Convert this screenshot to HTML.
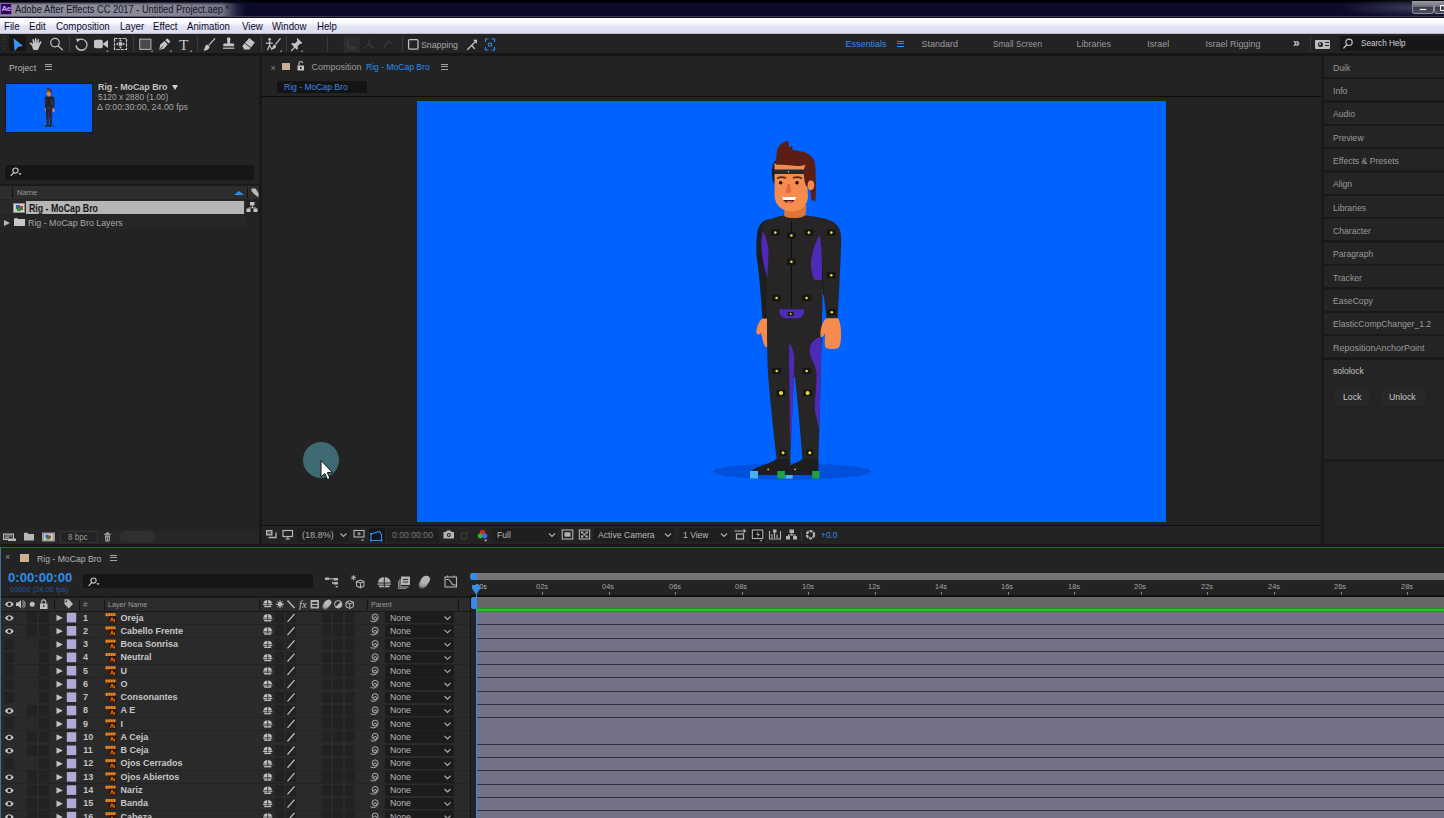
<!DOCTYPE html>
<html>
<head>
<meta charset="utf-8">
<title>Adobe After Effects CC 2017 - Untitled Project.aep *</title>
<style>
*{box-sizing:border-box;margin:0;padding:0}
html,body{width:1444px;height:818px;overflow:hidden;background:#191919}
body{font-family:"Liberation Sans",sans-serif;font-size:9px;color:#a2a2a2;position:relative}
.a{position:absolute}
.t{position:absolute;white-space:nowrap;line-height:1;transform-origin:0 50%}
svg{position:absolute;overflow:visible}
#titlebar{left:0;top:0;width:1444px;height:17.500px;background:#0c0c2a}
#menubar{left:0;top:17.500px;width:1444px;height:16.500px;background:linear-gradient(#ffffff 0%,#f6f6fd 35%,#e3e4f3 50%,#dddeee 92%,#a4a4b2 100%)}
#menubar .t{color:#0c0c2a;font-size:10.5px;top:3px;transform:scaleX(.92)}
#toolbar{left:0;top:34px;width:1444px;height:19px;background:#232323}
.panel{background:#232323}
.ws{top:40.400px;font-size:9px;color:#9b9b9b}
.sep{position:absolute;top:36px;width:1px;height:15px;background:#3a3a3a}
.rp{position:absolute;left:1324px;width:120px;height:21px;background:#242424}
.rp .t{left:9px;top:7.500px;font-size:9px;color:#9a9a9a}
.g{stroke:#c4c4c4;fill:none;stroke-width:1.2;stroke-linecap:round;stroke-linejoin:round}
.f{fill:#c4c4c4;stroke:none}
</style>
</head>
<body>
<div id="titlebar" class="a">
<div class="a" style="left:0;top:0;width:300px;height:17px;background:linear-gradient(90deg,rgba(150,150,162,.95) 0,rgba(146,146,160,.92) 160px,rgba(135,135,150,.85) 222px,rgba(70,70,95,.45) 236px,rgba(10,10,36,0) 246px)"></div>
<div class="a" style="left:0;top:0;width:1444px;height:2.500px;background:linear-gradient(#000 0,#000 50%,rgba(0,0,0,0))"></div><div class="a" style="left:0;top:0;width:250px;height:5px;background:linear-gradient(rgba(5,5,20,.95) 0,rgba(5,5,20,.8) 35%,rgba(5,5,20,0))"></div>
<div class="a" style="left:0;top:15.800px;width:1444px;height:1.700px;background:linear-gradient(rgba(40,40,60,.5),#5a5a68)"></div>
<div class="a" style="left:0;top:3px;width:12px;height:12px;background:#2a0a4a;border:1px solid #8a5cc0"></div>
<div class="t" style="left:1.5px;top:5px;font-size:8px;color:#c9a8ff;font-weight:bold;letter-spacing:-.5px">Ae</div>
<div class="t" style="left:15px;top:3.5px;font-size:10.5px;color:#15152a;transform:scaleX(.885)">Adobe After Effects CC 2017 - Untitled Project.aep *</div>
<div class="a" style="left:1340px;top:0;width:104px;height:17px;background:radial-gradient(ellipse at 70% 45%,rgba(120,120,150,.42),rgba(12,12,42,0) 72%)"></div>
<div class="a" style="left:1412px;top:1px;width:22px;height:13px;border:1px solid #8a8aa0;border-top:none;border-radius:0 0 3px 3px;background:linear-gradient(#9c9ca6,#70707c 45%,#3c3c4a 52%,#4e4e5c)"></div>
<div class="a" style="left:1419px;top:8px;width:8px;height:3px;background:#fff;border:1px solid #555"></div>
<div class="a" style="left:1434px;top:1px;width:12px;height:13px;border:1px solid #8a8aa0;border-top:none;border-radius:0 0 0 3px;background:linear-gradient(#9c9ca6,#70707c 45%,#3c3c4a 52%,#4e4e5c)"></div>
<div class="a" style="left:1440px;top:5px;width:6px;height:6px;border:1.5px solid #fff"></div>
</div>
<div id="menubar" class="a">
<div class="t" style="left:4px">File</div>
<div class="t" style="left:29px">Edit</div>
<div class="t" style="left:56px">Composition</div>
<div class="t" style="left:120px">Layer</div>
<div class="t" style="left:153px">Effect</div>
<div class="t" style="left:187px">Animation</div>
<div class="t" style="left:242px">View</div>
<div class="t" style="left:272px">Window</div>
<div class="t" style="left:317px">Help</div>
</div>
<div id="toolbar" class="a"></div>
<div class="a" style="left:0;top:53px;width:1444px;height:3px;background:#161616"></div>
<div class="a" style="left:3px;top:36px;width:1px;height:15px;background:repeating-linear-gradient(#4a4a4a 0 1px,transparent 1px 3px)"></div>
<div class="a" style="left:9px;top:35px;width:17px;height:16px;background:#161616"></div>
<svg style="left:0;top:34.600px" width="520" height="19" viewBox="0 34 520 19">
<path d="M13.6 37.2 L23 45 L18.2 45.8 L14.6 50.2 Z" fill="#3b95ff"/>
<g transform="translate(37 44.300) scale(1.120) translate(-37 -42.600)"><path class="f" d="M33 43.500 l-2.200-2 c-.8-.6 .2-1.800 1-1.200 l1.700 1.200 -.6-3.600 c-.1-1 1.200-1.200 1.400-.2 l.7 3 .1-3.800 c0-1 1.400-1 1.400 0 l.2 3.800 .8-3.200 c.2-1 1.500-.7 1.300 .2 l-.5 3.600 1.400-2 c.5-.8 1.600-.1 1.200 .7 l-1.600 3.300 c-.5 1.200-.8 2.600-1.600 3.400 l-3.600 0 c-.9-.9-1.300-2.100-1.300-3.200z"/></g>
<circle class="g" cx="55" cy="41.6" r="4.3" stroke-width="1.3"/><path class="g" d="M58.2 45 L62.4 48.8" stroke-width="1.7"/>
<path class="g" d="M78 39.5 A5.5 5.5 0 1 1 76.2 45" stroke-width="1.2"/><path class="g" d="M76.2 45 A5.5 5.5 0 0 0 84 48.600" stroke-dasharray="1 1.3" stroke-width="1"/><path class="f" d="M76 37.5 l4 .6 -2.600 3.200z"/>
<rect class="f" x="94" y="38.8" width="8.8" height="8.4" rx="1.6"/><path class="f" d="M102.500 43 L108 39 L108 47 Z"/><path class="f" d="M106 51 l2.200 0 0-2.200z" opacity=".7"/>
<rect x="114.500" y="37.500" width="12" height="11" class="g" stroke-dasharray="2.500 1.800" stroke-width="1.200"/><rect x="118.700" y="41.200" width="3.600" height="3.600" class="f"/><path class="f" d="M120.500 38.300l1.500 1.900h-3zM120.500 47.700l1.500-1.900h-3zM116 43l1.900-1.500v3zM125 43l-1.900-1.500v3z"/>
<rect x="139.700" y="38.200" width="11.200" height="10.200" fill="#4a4a4a" stroke="#a8a8a8" stroke-width="1.100"/><path class="f" d="M150.500 51 l2.200 0 0-2.200z" opacity=".7"/>
<path class="f" d="M159 49.200 l1.300-5.800 4.200-3.400 3.200 3.200 -3.400 4.200z"/><path class="f" d="M165.300 39.200 l1.900-1.900 3.300 3.300 -1.900 1.900z"/><path d="M159.300 48.900 l3.600-3.600" stroke="#232323" stroke-width=".8"/><path class="f" d="M169.500 51 l2.200 0 0-2.200z" opacity=".7"/>
<text x="179" y="48.600" font-family="Liberation Serif,serif" font-size="15.500" fill="#c4c4c4">T</text><path class="f" d="M189.500 51 l2.200 0 0-2.200z" opacity=".7"/>
<path class="g" d="M214.800 37.600 L209 44.200" stroke-width="2.400"/><path class="f" d="M203.400 49.600 c2.800 .3 5.600-.8 6.300-3.800 l-2.600-2.200 c-2.400 .7-1.800 4.200-3.700 6z"/>
<path class="f" d="M227.100 37.200 a1.900 1.900 0 0 1 3.200 0 c.6 1.400-.6 3.200-.4 5 l4.200 .6 0 2.400 -10.800 0 0-2.400 4.200-.6 c.2-1.800-1-3.600-.4-5z"/><rect class="f" x="223" y="46.600" width="11.400" height="1.200"/>
<path class="f" d="M249.200 37 l5.600 4.400 -5.400 7.200 -5.200-.2 -1.900-3.400z"/><path d="M245.200 42.300 l5.400 4.300" stroke="#232323" stroke-width=".9"/>
<circle class="f" cx="269.600" cy="38.400" r="1.400"/><path class="g" d="M269.600 40.300 v4 l-2 4.500 M269.600 44.300 l2.200 4.200 M266.300 42.200 h6" stroke-width="1.100"/><path class="g" d="M280.300 37.700 L275.800 43" stroke-width="1.700"/><path class="f" d="M271.500 48 c2 .2 4.200-.6 4.800-2.800 l-1.900-1.600 c-1.700 .5-1.400 3-2.900 4.400z"/><path class="f" d="M279.500 51 l2.200 0 0-2.200z" opacity=".7"/>
<path class="f" d="M297 36.800 l5.300 5.300 -1.200 .9 -1-.3 -2.500 2.500 .3 2.600 -1 1 -5.700-5.700 1-1 2.600 .3 2.500-2.500 -.3-1z"/><path class="g" d="M295 46 L291.500 49.500" stroke-width="1.200"/><path class="f" d="M300.500 51 l2.200 0 0-2.200z" opacity=".7"/>
<rect x="343.600" y="35.500" width="16.400" height="15.500" fill="#2c2c2c"/><path d="M348 38v9h8" stroke="#3c3c3c" stroke-width="1.300" fill="none"/><path d="M369 38v5l-4.500 4M369 43l4.500 4" stroke="#3a3a3a" stroke-width="1.200" fill="none"/><path d="M384 47l4-7 4 3" stroke="#393939" stroke-width="1.200" fill="none"/>
<rect x="408.600" y="38.700" width="9.400" height="9.400" rx="1" fill="none" stroke="#bdbdbd" stroke-width="1.300"/>
<path class="g" d="M467.500 48.500 l4-4 3 3 M471.500 44.500 L476.500 39.500" stroke-width="1.200"/><path class="f" d="M473 38.800 h4 v4z"/>
<g stroke="#2d8ceb" fill="none" stroke-width="1.200"><path d="M485.500 41v-3h3M491.500 38h3v3M494.500 46v3h-3M488.500 49h-3v-3"/><path d="M488.300 42.200h3.400v2.800h-3.400z" stroke-width="1"/></g>
</svg>
<div class="sep" style="left:69px"></div>
<div class="sep" style="left:133px"></div>
<div class="sep" style="left:196.5px"></div>
<div class="sep" style="left:260.5px"></div>
<div class="sep" style="left:286px"></div>
<div class="sep" style="left:326.5px"></div>
<div class="sep" style="left:402px"></div>
<div class="t" style="left:421px;top:40.700px;font-size:9px;color:#a8a8a8;transform:scaleX(.97)">Snapping</div>
<div class="t ws" style="left:845.5px;color:#2d8ceb">Essentials</div>
<div class="t ws" style="left:921.5px">Standard</div>
<div class="t ws" style="left:992.5px;transform:scaleX(.916)">Small Screen</div>
<div class="t ws" style="left:1076.5px">Libraries</div>
<div class="t ws" style="left:1147.3px">Israel</div>
<div class="t ws" style="left:1205.6px">Israel Rigging</div>
<div class="a" style="left:897px;top:41px;width:7px;height:6px;background:linear-gradient(#2d8ceb 0 1px,transparent 1px 2.500px,#2d8ceb 2.500px 3.500px,transparent 3.500px 5px,#2d8ceb 5px 6px)"></div>
<div class="t" style="left:1293px;top:37px;font-size:12px;color:#c8c8c8;font-weight:bold">»</div>
<div class="a" style="left:1309.500px;top:36px;width:1px;height:15px;background:#3a3a3a"></div>
<div class="a" style="left:1315px;top:39.500px;width:15px;height:9px;background:#bdbdbd;border-radius:1px"></div>
<div class="a" style="left:1317.500px;top:41.500px;width:5px;height:5px;background:#232323;border-radius:50%"></div><div class="a" style="left:1319px;top:43px;width:2px;height:2px;background:#bdbdbd;border-radius:50%"></div>
<div class="a" style="left:1324.500px;top:42px;width:4px;height:1.200px;background:#232323"></div><div class="a" style="left:1324.500px;top:45px;width:4px;height:1.200px;background:#232323"></div>
<div class="a" style="left:1340px;top:36px;width:104px;height:15px;background:#171717"></div>
<svg style="left:1340px;top:36px" width="20" height="15"><circle cx="9" cy="6.300" r="3.200" class="g" stroke-width="1.200"/><path class="g" d="M6.700 8.800 L3.800 12" stroke-width="1.400"/></svg>
<div class="t" style="left:1361px;top:39px;font-size:9px;color:#d2d2d2;transform:scaleX(.90)">Search Help</div>
<div id="project" class="a panel" style="left:0;top:56px;width:259px;height:488px"></div>
<div class="t" style="left:9.200px;top:62.500px;font-size:9.500px;color:#b4b4b4;transform:scaleX(.915)">Project</div>
<div class="a" style="left:45px;top:64px;width:7px;height:6px;background:linear-gradient(#a4a4a4 0 1px,transparent 1px 2.500px,#a4a4a4 2.500px 3.500px,transparent 3.500px 5px,#a4a4a4 5px 6px)"></div>
<div class="a" style="left:5px;top:83px;width:88px;height:50px;background:#0062ff;border:1px solid #10182c"></div>
<div class="t" style="left:97.500px;top:82.500px;font-size:9px;font-weight:bold;color:#c2c2c2;transform:scaleX(.985)">Rig - MoCap Bro</div>
<div class="a" style="left:172px;top:85px;width:0;height:0;border-left:3px solid transparent;border-right:3px solid transparent;border-top:5px solid #d0d0d0"></div>
<div class="t" style="left:97.500px;top:92.500px;font-size:9px;color:#a6a6a6;transform:scaleX(.93)">5120 x 2880 (1.00)</div>
<div class="t" style="left:97px;top:102.500px;font-size:9px;color:#a6a6a6;transform:scaleX(.983)">Δ 0:00:30:00, 24.00 fps</div>
<div class="a" style="left:5px;top:165px;width:248.500px;height:14.500px;background:#161616;border-radius:2px"></div>
<svg style="left:9px;top:166px" width="16" height="12"><circle cx="6.500" cy="4.600" r="2.600" class="g" stroke-width="1"/><path class="g" d="M4.600 6.600 L2 9.600" stroke-width="1.100"/><path class="f" d="M9.300 7.300 h3.400 l-1.700 2z"/></svg>
<div class="a" style="left:0;top:183.500px;width:259px;height:2.500px;background:#1a1a1a"></div>
<div class="a" style="left:0;top:186px;width:259px;height:13px;background:#2d2d2d"></div>
<div class="a" style="left:12px;top:187px;width:1px;height:11px;background:#121212"></div>
<div class="a" style="left:247px;top:187px;width:1px;height:11px;background:#121212"></div>
<div class="t" style="left:17px;top:189px;font-size:8px;color:#989898;transform:scaleX(.95)">Name</div>
<div class="a" style="left:234px;top:190.500px;width:0;height:0;border-left:5px solid transparent;border-right:5px solid transparent;border-bottom:4px solid #2d8ceb"></div>
<svg style="left:250px;top:187px" width="9" height="12"><path d="M1.500 1.500 h4 l3 4.500 v4.500 l-4.500-3.500 -2.500-3z" fill="#b8b8b8"/></svg>
<div class="a" style="left:0;top:200px;width:246px;height:14px;background:#292929"></div>
<div class="a" style="left:26px;top:200.500px;width:218px;height:13.500px;background:#b6b6b6"></div>
<div class="a" style="left:13px;top:203px;width:12px;height:10px;background:#cfcfcf;border:1px solid #8c8c8c"></div>
<div class="a" style="left:15.500px;top:205px;width:4px;height:4px;background:#2c5fb0"></div><div class="a" style="left:18.500px;top:206px;width:4px;height:4px;background:#c03a28"></div><div class="a" style="left:16.500px;top:208px;width:4px;height:3px;background:#2e8b3c"></div>
<div class="t" style="left:28.500px;top:203.500px;font-size:10px;font-weight:bold;color:#151515;transform:scaleX(.88)">Rig - MoCap Bro</div>
<svg style="left:246px;top:201px" width="12" height="12"><g fill="#c4c4c4"><rect x="4" y="1" width="4.500" height="3.500"/><rect x="0.500" y="7.500" width="4" height="3.500"/><rect x="7.500" y="7.500" width="4" height="3.500"/><path d="M5.800 4.500h1v2h3.200v1h-1v-.2h-5.500v.2h-1v-1h3.300z"/></g></svg>
<div class="a" style="left:0;top:215px;width:246px;height:14px;background:#262626"></div>
<div class="a" style="left:4px;top:219.500px;width:0;height:0;border-top:3px solid transparent;border-bottom:3px solid transparent;border-left:6px solid #b8b8b8"></div>
<div class="a" style="left:14px;top:219px;width:11px;height:7px;background:#c8c8c8"></div><div class="a" style="left:14px;top:217.500px;width:4px;height:1px;background:#a0a0a0"></div>
<div class="t" style="left:28px;top:218px;font-size:9.500px;color:#a8a8a8;transform:scaleX(.93)">Rig - MoCap Bro Layers</div>
<div class="a" style="left:0;top:529.500px;width:259px;height:14.500px;background:#262626"></div>
<svg style="left:0;top:529px" width="160" height="15"><g fill="#b8b8b8"><path d="M3 4.500h11v6.500h-11z M4.200 5.700v4.100h8.600v-4.100z" fill-rule="evenodd"/><rect x="5" y="6.500" width="7" height="1"/><rect x="5" y="8.300" width="4" height="1"/><rect x="8" y="9.500" width="8" height="2.500"/><path d="M24 3.800h3.500l1 1.200h5.500v6.500h-10z"/><rect x="42" y="3.500" width="13" height="9" fill="#9a9a9a"/><rect x="44" y="4.800" width="9" height="6.400" fill="#c8c8c8"/><rect x="45.500" y="5.800" width="3" height="3" fill="#2c5fb0"/><rect x="48" y="6.500" width="3" height="3" fill="#c03a28"/><rect x="46.500" y="8" width="3" height="2.500" fill="#2e8b3c"/><path d="M104 4.800h7v1h-7z M105 6.500h5l-.4 6h-4.200z M106.200 3.600h2.600v1.200h-2.600z"/></g><g stroke="#262626" stroke-width=".8"><path d="M106.600 7.500v4M108.400 7.500v4"/></g></svg>
<div class="a" style="left:60px;top:531px;width:38px;height:12px;border:1px solid #343434;background:#232323"></div>
<div class="t" style="left:68px;top:532.500px;font-size:8.500px;color:#9a9a9a;transform:scaleX(.95)">8 bpc</div>
<div class="a" style="left:119px;top:531px;width:36px;height:11px;background:#303030;border-radius:5.500px"></div>
<div id="comp" class="a panel" style="left:262px;top:56px;width:1058.500px;height:488px"></div>
<div class="t" style="left:270.500px;top:63.500px;font-size:9px;color:#858585">×</div>
<div class="a" style="left:281.500px;top:62.800px;width:8px;height:7.600px;background:#c4b094"></div>
<svg style="left:296px;top:60px" width="10" height="12"><rect x="1.500" y="5.500" width="6.500" height="5" fill="#c4c4c4"/><path d="M3 5.500v-2.200a1.800 1.800 0 0 1 3.600 0" stroke="#c4c4c4" stroke-width="1.100" fill="none"/><rect x="4" y="7" width="1.500" height="2" fill="#232323"/></svg>
<div class="t" style="left:311.500px;top:62.500px;font-size:9px;color:#9c9c9c;transform:scaleX(1.0)">Composition</div>
<div class="t" style="left:366px;top:62.500px;font-size:9px;color:#2d8ceb;transform:scaleX(.95)">Rig - MoCap Bro</div>
<div class="a" style="left:441px;top:64px;width:7px;height:6px;background:linear-gradient(#a4a4a4 0 1px,transparent 1px 2.500px,#a4a4a4 2.500px 3.500px,transparent 3.500px 5px,#a4a4a4 5px 6px)"></div>
<div class="a" style="left:277px;top:81px;width:90px;height:12px;background:#141414;border-radius:1px"></div>
<div class="t" style="left:284px;top:82.500px;font-size:9px;color:#3b86e0;transform:scaleX(.95)">Rig - MoCap Bro</div>
<div class="a" style="left:262px;top:96px;width:1058.500px;height:1.200px;background:#0c0c0c"></div>
<div class="a" style="left:417px;top:101px;width:749px;height:421px;background:#0062ff"></div>
<div class="a" style="left:262px;top:524.500px;width:1058.500px;height:1.500px;background:#0e0e0e"></div>
<svg style="left:700px;top:130px" width="200" height="360" viewBox="700 130 200 360"><g id="bro"><ellipse cx="792" cy="471.5" rx="79" ry="8.2" fill="#0050dc"/><path d="M770 219 C762 220 757.5 226 757 235 C756 245 756 255 757.5 262 C759 275 761 295 762.5 319 L768.5 319 L770 240Z" fill="#1f1e1e"/><path d="M762.5 318.5 L768 318.5 L768 347 C766 348 764.5 346 763.5 343 C762.5 340 762 336 761 333 C759.5 334.5 757.500 335 756.500 333.500 C756 329 758 322 762.500 318.500Z" fill="#f58c4e"/><path d="M767 318 L822 318 C822 335 821 360 820.5 380 C820 410 819 440 818.400 460 L802.500 460 C801 440 798.500 410 795 377 L793.500 377 C792.500 410 791 440 790.200 460 L776.800 460 C774.500 440 770 400 768 373 C767 350 767 335 767 318Z" fill="#272525"/><path d="M789.500 342 C791 345 793.500 350 794 356 C794.500 364 794 370 793.600 377 C793 400 792 420 791 446 C789.500 430 789.800 410 789.600 395 C789.300 375 788.800 355 789.500 342Z" fill="#4f2ab8"/><path d="M820.800 337 C815 338 809.500 343 809.700 350.500 C810 358 815 364 816.300 371 C817.500 380 815 395 814.800 407 C814.800 415 818 422 819.300 430 L820.300 390 C820.800 370 821.500 350 820.800 337Z" fill="#4f2ab8"/><path d="M752.300 475 L752.300 470.500 C756 466.500 770 464 776.500 459 L790.200 459 L790.200 475Z" fill="#1f1e1e"/><path d="M779.200 475 L779.200 470.500 C783 466.500 797 464 802.500 459 L818.400 459 L818.400 475Z" fill="#1f1e1e"/><circle cx="768.200" cy="469.300" r=".9" fill="#e9dc3c"/><circle cx="795.100" cy="469.300" r=".9" fill="#e9dc3c"/><rect x="750" y="471" width="8" height="7.500" fill="#4ab2ee"/><rect x="777.300" y="471" width="7.600" height="7.500" fill="#1fa243"/><rect x="785.400" y="475" width="7.300" height="3.700" fill="#4ab2ee"/><rect x="812.200" y="471" width="7.400" height="7.500" fill="#1fa243"/><path d="M784.500 205 L806.500 205 L805 221 C798 223.500 790 223.500 784 221Z" fill="#dd7439"/><path d="M784 215.400 C786 219 802 219 804.200 215.400 C812 216 820 217 826 219.500 L823 262 C822.500 280 822.500 300 822 320 L767 320 C766.500 300 766.500 280 766.500 262 L762 225 C768 219 776 216.500 784 215.400Z" fill="#272525"/><path d="M818 218 C828 218 836.500 222 839.500 229 C841.500 234 841.300 240 841 246 C840.800 258 840 270 839.600 280 C839 295 838.300 305 837.800 318.500 L826.300 318.500 C825.500 308 823.800 298 823 290 C822 280 822.300 272 822.300 266 L819 240Z" fill="#272525"/><path d="M822.300 266 C822 275 822.500 285 823.600 295" stroke="#1a1919" stroke-width="1" fill="none"/><path d="M826.500 318.300 L838 318.300 C840.500 322 841.500 330 841 338 C840.700 343 840 347 838 348.300 C835 349.500 829 349.500 825.500 347.500 C824 343 825.200 337 825 333 C823.800 336.500 821.500 338 820.600 336.500 C820 331 821.500 322 826.500 318.300Z" fill="#f58c4e"/><path d="M762.500 231.500 C766 236 768.800 246 768.500 254.500 C768.300 262 767.800 270 767.200 277.500 C765.500 272 763 262 762 254 C761 246 761.300 237 762.500 231.500Z" fill="#4f2ab8"/><path d="M819.600 234.800 C816 242 811 252 811 263.800 C811 271 812.500 277 815 280 L821.800 280 C822 270 822 262 821.700 256 C821.500 248 820.500 240 819.600 234.800Z" fill="#4f2ab8"/><path d="M791.400 221.500 V307" stroke="#0e0e0e" stroke-width="1.100"/><path d="M779.300 309.300 L804.200 309.300 C804.500 314 802 318.200 797 318.200 L786 318.200 C781 318.200 779 314 779.300 309.300Z" fill="#4f2ab8"/><rect x="770.8" y="229.3" width="9" height="6.5" rx="1" fill="#161616"/><circle cx="775.3" cy="232.6" r="1.3" fill="#e9dc3c"/><rect x="786.9" y="232.2" width="9" height="6.5" rx="1" fill="#161616"/><circle cx="791.4" cy="235.5" r="1.3" fill="#e9dc3c"/><rect x="804.4" y="229.3" width="9" height="6.5" rx="1" fill="#161616"/><circle cx="808.9" cy="232.6" r="1.3" fill="#e9dc3c"/><rect x="826.8" y="229.3" width="9" height="6.5" rx="1" fill="#161616"/><circle cx="831.3" cy="232.6" r="1.3" fill="#e9dc3c"/><rect x="786.9" y="258.6" width="9" height="6.5" rx="1" fill="#161616"/><circle cx="791.4" cy="261.8" r="1.3" fill="#e9dc3c"/><rect x="826.8" y="271.9" width="9" height="6.5" rx="1" fill="#161616"/><circle cx="831.3" cy="275.2" r="1.3" fill="#e9dc3c"/><rect x="772.1" y="294.8" width="9" height="6.5" rx="1" fill="#161616"/><circle cx="776.6" cy="298" r="1.3" fill="#e9dc3c"/><rect x="802.1" y="294.8" width="9" height="6.5" rx="1" fill="#161616"/><circle cx="806.6" cy="298" r="1.3" fill="#e9dc3c"/><rect x="827.3" y="308.9" width="9" height="6.5" rx="1" fill="#161616"/><circle cx="831.8" cy="312.2" r="1.3" fill="#e9dc3c"/><rect x="772.2" y="367.8" width="9" height="6.5" rx="1" fill="#161616"/><circle cx="776.7" cy="371" r="1.3" fill="#e9dc3c"/><rect x="802.2" y="367.8" width="9" height="6.5" rx="1" fill="#161616"/><circle cx="806.7" cy="371" r="1.3" fill="#e9dc3c"/><rect x="787.7" y="312.0" width="6" height="4" rx="1" fill="#161616"/><circle cx="790.7" cy="314" r="0.9" fill="#e9dc3c"/><rect x="776.5" y="389.8" width="9" height="6.5" rx="1" fill="#161616"/><circle cx="781" cy="393" r="2" fill="#e9dc3c"/><rect x="803.1" y="389.8" width="9" height="6.5" rx="1" fill="#161616"/><circle cx="807.6" cy="393" r="2" fill="#e9dc3c"/><rect x="779.5" y="449.8" width="7" height="6" rx="1" fill="#161616"/><circle cx="783" cy="452.8" r="1.5" fill="#e9dc3c"/><rect x="806.3" y="449.8" width="7" height="6" rx="1" fill="#161616"/><circle cx="809.8" cy="452.8" r="1.5" fill="#e9dc3c"/><path d="M776.500 160 C773 162 771.800 168 772 174 C772 179 773 183 775 184.500 L777.500 184 Z" fill="#1c1a1a"/><path d="M774.400 163.500 L806 163.500 L808 196 C808 205 801 211.500 792 211.500 C783 211.500 775 206 774.600 196Z" fill="#f58c4e"/><path d="M776.300 164.800 C776 160 776.200 154 777.500 148.400 C779.500 144.500 783 142 787.500 141 L788.800 141.600 C788.600 143.500 788.700 145.500 789.200 147.200 L792.200 146.200 L792.800 150.200 C797 150.500 801 151 803.800 152 C808 153.500 812 156 814 160 C815.500 163 815.700 170 815.900 184 C816 190 815.800 196 815.400 201.500 C813.500 201.300 812.200 200.300 811.200 198.600 C811.200 195 811 192 810.500 189 L806 186 C804.500 182 803.500 176 803.700 170 L805.500 164.600 C803 165.800 800 166.300 797 166 C790 165.300 783 164.800 776.300 164.800Z" fill="#5a1e14"/><ellipse cx="810.900" cy="185.300" rx="3.300" ry="4.800" fill="#f58c4e"/><rect x="773.800" y="169.500" width="30.400" height="4.500" rx="1" fill="#25282c"/><circle cx="788.500" cy="171.700" r=".8" fill="#cfe060"/><path d="M777.500 178.200 C780 176.800 783 176.800 785.500 177.800 M793.500 177.800 C796 176.800 799 176.800 801.300 178.200" stroke="#5a2416" stroke-width="1.700" fill="none" stroke-linecap="round"/><circle cx="780.700" cy="182.700" r="1.800" fill="#140c0c"/><circle cx="797" cy="182.700" r="1.800" fill="#140c0c"/><path d="M787.500 184 L790 184 L791 192 C790 193.300 787 193.300 786 192Z" fill="#ea6349"/><path d="M782 197 L796.200 197 C795 201 792 203 789 203 C786 203 783 201 782 197Z" fill="#5a1a14"/><path d="M782 197 L796.200 197 C796 198.500 795.500 199.300 795 199.900 L783.200 199.900 C782.600 199.300 782.200 198.300 782 197Z" fill="#ffffff"/><ellipse cx="789.200" cy="202" rx="2.800" ry="1" fill="#e56a5a"/></g></svg>
<svg style="left:5px;top:83.400px" width="87.500" height="49.200" viewBox="417 101 749 421"><use href="#bro"/></svg>
<div class="a" style="left:297px;top:528px;width:52px;height:14px;background:#1e1e1e"></div>
<div class="a" style="left:369px;top:528px;width:15.500px;height:14px;background:#161616"></div>
<div class="a" style="left:386.500px;top:528px;width:52px;height:14px;background:#1e1e1e"></div>
<div class="a" style="left:492px;top:528px;width:65px;height:14px;background:#1e1e1e"></div>
<div class="a" style="left:594px;top:528px;width:80px;height:14px;background:#1e1e1e"></div>
<div class="a" style="left:678.500px;top:528px;width:51px;height:14px;background:#1e1e1e"></div>
<div class="a" style="left:750px;top:528px;width:15px;height:14px;background:#181818"></div>
<div class="a" style="left:801px;top:529px;width:1px;height:12px;background:#383838"></div>
<svg style="left:262px;top:526px" width="600" height="18" viewBox="262 526 600 18">
<rect x="266" y="530" width="6.500" height="5.500" fill="#b4b4b4"/><path d="M268.500 537.500h7.500v-5" stroke="#b4b4b4" stroke-width="1.300" fill="none"/><rect x="267.200" y="531.200" width="4" height="3" fill="#5a5a5a"/>
<rect x="283" y="530.500" width="9.500" height="6" fill="none" stroke="#b4b4b4" stroke-width="1.200"/><path d="M285.500 539h4.500M287.800 536.500v2.500" stroke="#b4b4b4" stroke-width="1.200"/>
<path d="M340.5 533.5 l3 3 3-3" stroke="#b0b0b0" stroke-width="1.100" fill="none"/>
<rect x="354" y="530.500" width="10" height="6.500" fill="none" stroke="#b4b4b4" stroke-width="1.100"/><path d="M359 532v3.500M357.300 533.800h3.400" stroke="#b4b4b4" stroke-width=".9"/><path d="M361 539.500h3l-1.500 1.800z" fill="#b4b4b4"/>
<path d="M371 540.500v-6.500l8.500-2.500 2 3v6z" stroke="#2d8ceb" stroke-width="1.100" fill="none"/><rect x="370" y="539.500" width="2" height="2" fill="#2d8ceb"/><rect x="380.500" y="539.500" width="2" height="2" fill="#2d8ceb"/><rect x="370" y="533" width="2" height="2" fill="#2d8ceb"/>
<path d="M443.500 532h2.500l1-1.500h3.500l1 1.500h2.500v6.500h-10.500z" fill="#b4b4b4"/><circle cx="448.800" cy="535" r="2" fill="#232323"/><circle cx="448.800" cy="535" r="1" fill="#b4b4b4"/>
<circle cx="464" cy="536" r="2.800" stroke="#3c3c3c" stroke-width="1.200" fill="none"/><path d="M466 533.500l3-2.500" stroke="#3c3c3c" stroke-width="1.200"/>
<circle cx="482.500" cy="532.300" r="2.600" fill="#e02020"/><circle cx="480.300" cy="535.800" r="2.600" fill="#28b428"/><circle cx="484.700" cy="535.800" r="2.600" fill="#3a6cf0"/><path d="M484 539.800h3.400l-1.700 1.800z" fill="#d0d0d0"/>
<path d="M549 533.5 l3 3 3-3" stroke="#b0b0b0" stroke-width="1.100" fill="none"/>
<rect x="562.200" y="530" width="10.600" height="9" fill="none" stroke="#b4b4b4" stroke-width="1.100"/><rect x="564.500" y="532.300" width="6" height="4.400" fill="#b4b4b4"/>
<rect x="579.300" y="530" width="10.400" height="9" fill="none" stroke="#b4b4b4" stroke-width="1.100"/><path d="M581 531.500h2.300v2h-2.300zM585.500 531.500h2.300v2h-2.300zM583.300 533.500h2.200v2h-2.200zM581 535.500h2.300v2h-2.300zM585.500 535.500h2.300v2h-2.300z" fill="#b4b4b4"/>
<path d="M665 533.5 l3 3 3-3" stroke="#b0b0b0" stroke-width="1.100" fill="none"/>
<path d="M721 533.5 l3 3 3-3" stroke="#b0b0b0" stroke-width="1.100" fill="none"/>
<path d="M734.500 531h11M743.500 529.300l2 1.700-2 1.700" stroke="#b4b4b4" stroke-width="1.100" fill="none"/><rect x="736.500" y="534" width="7" height="5" fill="none" stroke="#b4b4b4" stroke-width="1.200"/>
<rect x="752.300" y="530" width="10.500" height="8.500" fill="none" stroke="#b4b4b4" stroke-width="1.100"/><path d="M758.500 531.500l-2.500 3h2l-1 3 3-3.500h-2z" fill="#b4b4b4"/><path d="M759.500 540h3l-1.500 1.500z" fill="#b4b4b4"/>
<path d="M769.500 531v8h11v-8M772 538v-4M774.500 538v-6.500M777 538v-3.500" stroke="#b4b4b4" stroke-width="1.100" fill="none"/><rect x="773" y="529.500" width="3.500" height="3" fill="#b4b4b4"/>
<g fill="#b4b4b4"><rect x="789.500" y="529.500" width="4.500" height="3.500"/><rect x="786" y="536" width="4" height="3.500"/><rect x="793" y="536" width="4" height="3.500"/><path d="M791.300 533h1v1.500h3.200v1.500h-1v-.5h-5.500v.5h-1v-1.500h3.300z"/></g>
<circle cx="810.500" cy="534.700" r="3.600" fill="none" stroke="#b4b4b4" stroke-width="2.200" stroke-dasharray="3 .9"/>
</svg>
<div class="t" style="left:301.5px;top:530.500px;font-size:9px;color:#ababab;transform:scaleX(1.01)">(18.8%)</div>
<div class="t" style="left:392px;top:530.500px;font-size:9px;color:#7a7a7a;transform:scaleX(0.963)">0:00:00:00</div>
<div class="t" style="left:497px;top:530.500px;font-size:9px;color:#b8b8b8;transform:scaleX(0.95)">Full</div>
<div class="t" style="left:598px;top:530.500px;font-size:9px;color:#b8b8b8;transform:scaleX(0.96)">Active Camera</div>
<div class="t" style="left:683px;top:530.500px;font-size:9px;color:#b8b8b8;transform:scaleX(0.95)">1 View</div>
<div class="t" style="left:821px;top:530.500px;font-size:9px;color:#2d8ceb;transform:scaleX(0.93)">+0.0</div>
<div class="rp" style="top:56.00px"><div class="t" style="transform:scaleX(0.957)">Duik</div></div>
<div class="rp" style="top:79.35px"><div class="t" style="transform:scaleX(0.957)">Info</div></div>
<div class="rp" style="top:102.70px"><div class="t" style="transform:scaleX(0.957)">Audio</div></div>
<div class="rp" style="top:126.05px"><div class="t" style="transform:scaleX(0.957)">Preview</div></div>
<div class="rp" style="top:149.40px"><div class="t" style="transform:scaleX(0.957)">Effects &amp; Presets</div></div>
<div class="rp" style="top:172.75px"><div class="t" style="transform:scaleX(0.957)">Align</div></div>
<div class="rp" style="top:196.10px"><div class="t" style="transform:scaleX(0.957)">Libraries</div></div>
<div class="rp" style="top:219.45px"><div class="t" style="transform:scaleX(0.957)">Character</div></div>
<div class="rp" style="top:242.80px"><div class="t" style="transform:scaleX(0.957)">Paragraph</div></div>
<div class="rp" style="top:266.15px"><div class="t" style="transform:scaleX(0.957)">Tracker</div></div>
<div class="rp" style="top:289.50px"><div class="t" style="transform:scaleX(0.957)">EaseCopy</div></div>
<div class="rp" style="top:312.85px"><div class="t" style="transform:scaleX(0.957)">ElasticCompChanger_1.2</div></div>
<div class="rp" style="top:336.20px"><div class="t" style="transform:scaleX(1.0)">RepositionAnchorPoint</div></div>
<div class="a panel" style="left:1324px;top:359.55px;width:120px;height:99.95px;background:#242424"></div>
<div class="t" style="left:1333px;top:366.75px;font-size:9px;color:#c0c0c0;transform:scaleX(.95)">sololock</div>
<div class="a" style="left:1335px;top:389px;width:34px;height:17px;background:#282828;border-radius:2px"></div>
<div class="a" style="left:1381px;top:389px;width:44px;height:17px;background:#282828;border-radius:2px"></div>
<div class="t" style="left:1342.500px;top:392.500px;font-size:9px;color:#c6c6c6;transform:scaleX(.97)">Lock</div>
<div class="t" style="left:1389px;top:392.500px;font-size:9px;color:#c6c6c6;transform:scaleX(.97)">Unlock</div>
<div class="a panel" style="left:1324px;top:461.500px;width:120px;height:82.500px;background:#222222"></div>
<div class="a" style="left:303px;top:441.500px;width:36px;height:36px;border-radius:50%;background:#3f6a73"></div>
<svg style="left:318px;top:458px" width="16" height="24"><path d="M3 2.500 L3 19 L6.800 15.500 L9.500 21.500 L12 20.400 L9.400 14.600 L14.300 14.300 Z" fill="#fff" stroke="#111" stroke-width="1"/></svg>
<div id="timeline" class="a panel" style="left:0;top:548px;width:1444px;height:270px"></div>
<div class="a" style="left:0;top:546.500px;width:1444px;height:1.500px;background:#24569e"></div>
<div class="a" style="left:0;top:547px;width:1.200px;height:271px;background:#3f6f9e"></div>
<div class="t" style="left:5px;top:553px;font-size:9px;color:#8a8a8a">×</div>
<div class="a" style="left:20px;top:553.500px;width:8.500px;height:8.500px;background:#c9b38f"></div>
<div class="t" style="left:36.500px;top:553.500px;font-size:9.500px;color:#b4b4b4;transform:scaleX(.91)">Rig - MoCap Bro</div>
<div class="a" style="left:110px;top:554.500px;width:7px;height:6px;background:linear-gradient(#a4a4a4 0 1px,transparent 1px 2.500px,#a4a4a4 2.500px 3.500px,transparent 3.500px 5px,#a4a4a4 5px 6px)"></div>
<div class="t" style="left:8.300px;top:571px;font-size:13px;font-weight:bold;color:#2d8ceb;transform:scaleX(1.010)">0:00:00:00</div>
<div class="t" style="left:10px;top:585.500px;font-size:8px;color:#1f5aa5;transform:scaleX(.93)">00000 (24.00 fps)</div>
<div class="a" style="left:83px;top:574.300px;width:229.500px;height:14.200px;background:#161616;border-radius:2px"></div>
<svg style="left:87px;top:575.500px" width="16" height="12"><circle cx="6.500" cy="4.600" r="2.600" class="g" stroke-width="1"/><path class="g" d="M4.600 6.600 L2 9.600" stroke-width="1.100"/><path class="f" d="M9.300 7.300 h3.400 l-1.700 2z"/></svg>
<svg style="left:320px;top:572px" width="145" height="22" viewBox="320 572 145 22">
<g fill="#b4b4b4"><rect x="325" y="577.500" width="4" height="2.500"/><rect x="333.500" y="578" width="4.500" height="2.500"/><rect x="333.500" y="582" width="4.500" height="2.500"/><path d="M329 578.300h4.500v1h-4.500zM331 578.300h1v5.500h2.500v-1h-1.500z"/><path d="M335 586h3.400l-1.700 1.800z"/></g>
<g stroke="#b4b4b4" fill="none" stroke-width="1.100"><path d="M356.500 581.500l4-1.500 3.500 1.500v4.500l-3.500 1.800-4-1.800z M356.500 581.500l4 1.500 3.500-1.500M360.500 583v4.800"/><path d="M353.500 575v5.500M350.800 577.700h5.400M351.600 575.800l3.800 3.800M355.400 575.800l-3.800 3.800" stroke-width=".9"/></g>
<g fill="#b4b4b4"><path d="M378 582.500a6.300 5.500 0 0 1 12.600 0z"/><rect x="377.500" y="583.500" width="13.500" height="1.200"/><rect x="379" y="585.500" width="10.500" height="1.800"/></g><path d="M384.300 577v10" stroke="#232323" stroke-width="1"/>
<g fill="#b4b4b4"><rect x="401" y="576.500" width="9" height="8.500"/><path d="M399.500 579v8.500h9v-1h-8v-7.500z"/><path d="M398 581v8h8.500v-1h-7.500v-7z" opacity=".7"/></g><path d="M403 579.500h5M403 582h5" stroke="#232323" stroke-width=".9"/>
<g fill="#b4b4b4"><ellipse cx="425.500" cy="580" rx="4.800" ry="4" transform="rotate(-30 425.500 580)"/><ellipse cx="424" cy="582.500" rx="4.800" ry="4" transform="rotate(-30 424 582.500)" opacity=".75"/><ellipse cx="422.800" cy="584.800" rx="4.300" ry="3.500" transform="rotate(-30 422.800 584.800)" opacity=".5"/></g>
<rect x="445" y="577" width="11.500" height="10" fill="none" stroke="#b4b4b4" stroke-width="1.100"/><path d="M446 579.500h2c3.500 0 2.500 5.500 6 5.500h2" stroke="#b4b4b4" stroke-width="1.100" fill="none"/><path d="M447.500 577v-1.500M454 577v-1.500" stroke="#b4b4b4" stroke-width="1"/>
</svg>
<div class="a" style="left:1px;top:595.500px;width:470px;height:2px;background:#191919"></div>
<div class="a" style="left:1px;top:597.500px;width:469px;height:13.500px;background:#2c2c2c"></div>
<div class="a" style="left:1px;top:610.800px;width:469px;height:1px;background:#181818"></div>
<div class="a" style="left:53.5px;top:599px;width:1px;height:10.500px;background:#141414"></div>
<div class="a" style="left:79px;top:599px;width:1px;height:10.500px;background:#141414"></div>
<div class="a" style="left:103.5px;top:599px;width:1px;height:10.500px;background:#141414"></div>
<div class="a" style="left:259px;top:599px;width:1px;height:10.500px;background:#141414"></div>
<div class="a" style="left:366.5px;top:599px;width:1px;height:10.500px;background:#141414"></div>
<div class="a" style="left:457.5px;top:599px;width:1px;height:10.500px;background:#141414"></div>
<div class="t" style="left:83px;top:600.500px;font-size:8px;color:#909090">#</div>
<div class="t" style="left:107.500px;top:600.500px;font-size:8px;color:#9c9c9c;transform:scaleX(.90)">Layer Name</div>
<div class="t" style="left:370.500px;top:600.500px;font-size:8px;color:#9c9c9c;transform:scaleX(.88)">Parent</div>
<svg style="left:0;top:597px" width="470" height="14" viewBox="0 597 470 14">
<path d="M5 604.2 c2.200-3.700 6.400-3.700 8.600 0 c-2.200 3.700-6.400 3.700-8.600 0z" fill="#c6c6c6"/><circle cx="9.3" cy="604.2" r="1.700" fill="#1c1c1c"/>
<g fill="#c0c0c0"><path d="M16 602.500h2.200l2.800-2.300v8l-2.800-2.300h-2.200z"/></g><path d="M22 601.500a3.500 3.500 0 0 1 0 5.500M23.200 600.300a5.200 5.200 0 0 1 0 8" stroke="#c0c0c0" stroke-width=".9" fill="none"/>
<circle cx="32.200" cy="604.300" r="2.500" fill="#c0c0c0"/>
<rect x="40" y="603.500" width="7.500" height="5.500" fill="#c0c0c0"/><path d="M41.700 603.500v-1.600a2 2 0 0 1 4 0v1.600" stroke="#c0c0c0" stroke-width="1.100" fill="none"/><rect x="43.200" y="605" width="1.200" height="2" fill="#2c2c2c"/>
<path d="M64.500 599.300h4.300l4.200 4.700-4.200 4.500-4.300-4.500z" fill="#b8b8b8"/><circle cx="66.300" cy="601.300" r=".9" fill="#2c2c2c"/>
<g fill="#c0c0c0"><path d="M263.5 603.5a4.200 3.600 0 0 1 8.400 0z"/><rect x="263" y="604.1" width="9.400" height="1"/><rect x="264.2" y="605.7" width="7" height="1.500"/></g><path d="M267.7 599.7v6.500" stroke="#2b2b2b" stroke-width=".9"/>
<g stroke="#c0c0c0" stroke-width="1" fill="none"><circle cx="280" cy="604.300" r="1.700" fill="#c0c0c0"/><path d="M280 600.300v8M276 604.300h8M277.200 601.500l5.600 5.600M282.800 601.500l-5.600 5.600"/></g>
<path d="M287.500 600.500l7 7.500" stroke="#c0c0c0" stroke-width="1.300"/>
<text x="299" y="608" font-family="Liberation Serif,serif" font-style="italic" font-size="10.500" fill="#c0c0c0">fx</text>
<rect x="310.500" y="600" width="8.500" height="8.500" fill="#b0b0b0"/><rect x="312.300" y="602" width="5" height="1.800" fill="#2c2c2c"/><rect x="312.300" y="605" width="5" height="1.800" fill="#2c2c2c"/>
<g fill="#b8b8b8"><ellipse cx="327.800" cy="603" rx="3.800" ry="3" transform="rotate(-30 327.800 603)"/><ellipse cx="326.500" cy="605" rx="3.800" ry="3" transform="rotate(-30 326.500 605)" opacity=".7"/><ellipse cx="325.500" cy="606.700" rx="3.300" ry="2.600" transform="rotate(-30 325.500 606.700)" opacity=".45"/></g>
<circle cx="338.200" cy="604.300" r="3.700" fill="none" stroke="#c0c0c0" stroke-width="1"/><path d="M335.600 606.900a3.700 3.700 0 0 0 5.200-5.200z" fill="#c0c0c0"/>
<g stroke="#c0c0c0" fill="none" stroke-width="1"><path d="M346 602.300l3.700-1.600 3.700 1.600v4.400l-3.700 1.800-3.700-1.800z M346 602.300l3.700 1.500 3.700-1.500M349.700 603.800v4.600"/></g>
</svg>
<div class="a" style="left:1px;top:611.50px;width:469px;height:12.67px;background:#2a2a2a"></div>
<div class="a" style="left:38.9px;top:612.20px;width:9.800px;height:10.87px;background:#222222"></div>
<div class="a" style="left:274.5px;top:612.20px;width:9.800px;height:10.87px;background:#222222"></div>
<div class="a" style="left:286px;top:612.20px;width:9.800px;height:10.87px;background:#222222"></div>
<div class="a" style="left:321.7px;top:612.20px;width:9.800px;height:10.87px;background:#222222"></div>
<div class="a" style="left:333.3px;top:612.20px;width:9.800px;height:10.87px;background:#222222"></div>
<div class="a" style="left:345px;top:612.20px;width:9.800px;height:10.87px;background:#222222"></div>
<div class="a" style="left:27.2px;top:612.20px;width:9.800px;height:10.87px;background:#222222"></div>
<div class="a" style="left:385px;top:612.00px;width:69px;height:11.47px;background:#1c1c1c;border-radius:1px"></div>
<div class="t" style="left:83px;top:613.50px;font-size:9px;font-weight:bold;color:#c2c2c2">1</div>
<div class="t" style="left:120.500px;top:613.50px;font-size:9px;font-weight:bold;color:#c6c6c6">Oreja</div>
<div class="t" style="left:390px;top:613.50px;font-size:9px;color:#b8b8b8;transform:scaleX(.97)">None</div>
<div class="a" style="left:1px;top:624.77px;width:469px;height:12.67px;background:#2a2a2a"></div>
<div class="a" style="left:38.9px;top:625.47px;width:9.800px;height:10.87px;background:#222222"></div>
<div class="a" style="left:274.5px;top:625.47px;width:9.800px;height:10.87px;background:#222222"></div>
<div class="a" style="left:286px;top:625.47px;width:9.800px;height:10.87px;background:#222222"></div>
<div class="a" style="left:321.7px;top:625.47px;width:9.800px;height:10.87px;background:#222222"></div>
<div class="a" style="left:333.3px;top:625.47px;width:9.800px;height:10.87px;background:#222222"></div>
<div class="a" style="left:345px;top:625.47px;width:9.800px;height:10.87px;background:#222222"></div>
<div class="a" style="left:27.2px;top:625.47px;width:9.800px;height:10.87px;background:#222222"></div>
<div class="a" style="left:385px;top:625.27px;width:69px;height:11.47px;background:#1c1c1c;border-radius:1px"></div>
<div class="t" style="left:83px;top:626.77px;font-size:9px;font-weight:bold;color:#c2c2c2">2</div>
<div class="t" style="left:120.500px;top:626.77px;font-size:9px;font-weight:bold;color:#c6c6c6">Cabello Frente</div>
<div class="t" style="left:390px;top:626.77px;font-size:9px;color:#b8b8b8;transform:scaleX(.97)">None</div>
<div class="a" style="left:1px;top:638.04px;width:469px;height:12.67px;background:#2a2a2a"></div>
<div class="a" style="left:38.9px;top:638.74px;width:9.800px;height:10.87px;background:#222222"></div>
<div class="a" style="left:274.5px;top:638.74px;width:9.800px;height:10.87px;background:#222222"></div>
<div class="a" style="left:286px;top:638.74px;width:9.800px;height:10.87px;background:#222222"></div>
<div class="a" style="left:321.7px;top:638.74px;width:9.800px;height:10.87px;background:#222222"></div>
<div class="a" style="left:333.3px;top:638.74px;width:9.800px;height:10.87px;background:#222222"></div>
<div class="a" style="left:345px;top:638.74px;width:9.800px;height:10.87px;background:#222222"></div>
<div class="a" style="left:4.2px;top:638.74px;width:9.800px;height:10.87px;background:#222222"></div>
<div class="a" style="left:385px;top:638.54px;width:69px;height:11.47px;background:#1c1c1c;border-radius:1px"></div>
<div class="t" style="left:83px;top:640.04px;font-size:9px;font-weight:bold;color:#c2c2c2">3</div>
<div class="t" style="left:120.500px;top:640.04px;font-size:9px;font-weight:bold;color:#c6c6c6">Boca Sonrisa</div>
<div class="t" style="left:390px;top:640.04px;font-size:9px;color:#b8b8b8;transform:scaleX(.97)">None</div>
<div class="a" style="left:1px;top:651.31px;width:469px;height:12.67px;background:#2a2a2a"></div>
<div class="a" style="left:38.9px;top:652.01px;width:9.800px;height:10.87px;background:#222222"></div>
<div class="a" style="left:274.5px;top:652.01px;width:9.800px;height:10.87px;background:#222222"></div>
<div class="a" style="left:286px;top:652.01px;width:9.800px;height:10.87px;background:#222222"></div>
<div class="a" style="left:321.7px;top:652.01px;width:9.800px;height:10.87px;background:#222222"></div>
<div class="a" style="left:333.3px;top:652.01px;width:9.800px;height:10.87px;background:#222222"></div>
<div class="a" style="left:345px;top:652.01px;width:9.800px;height:10.87px;background:#222222"></div>
<div class="a" style="left:4.2px;top:652.01px;width:9.800px;height:10.87px;background:#222222"></div>
<div class="a" style="left:385px;top:651.81px;width:69px;height:11.47px;background:#1c1c1c;border-radius:1px"></div>
<div class="t" style="left:83px;top:653.31px;font-size:9px;font-weight:bold;color:#c2c2c2">4</div>
<div class="t" style="left:120.500px;top:653.31px;font-size:9px;font-weight:bold;color:#c6c6c6">Neutral</div>
<div class="t" style="left:390px;top:653.31px;font-size:9px;color:#b8b8b8;transform:scaleX(.97)">None</div>
<div class="a" style="left:1px;top:664.58px;width:469px;height:12.67px;background:#2a2a2a"></div>
<div class="a" style="left:38.9px;top:665.28px;width:9.800px;height:10.87px;background:#222222"></div>
<div class="a" style="left:274.5px;top:665.28px;width:9.800px;height:10.87px;background:#222222"></div>
<div class="a" style="left:286px;top:665.28px;width:9.800px;height:10.87px;background:#222222"></div>
<div class="a" style="left:321.7px;top:665.28px;width:9.800px;height:10.87px;background:#222222"></div>
<div class="a" style="left:333.3px;top:665.28px;width:9.800px;height:10.87px;background:#222222"></div>
<div class="a" style="left:345px;top:665.28px;width:9.800px;height:10.87px;background:#222222"></div>
<div class="a" style="left:4.2px;top:665.28px;width:9.800px;height:10.87px;background:#222222"></div>
<div class="a" style="left:385px;top:665.08px;width:69px;height:11.47px;background:#1c1c1c;border-radius:1px"></div>
<div class="t" style="left:83px;top:666.58px;font-size:9px;font-weight:bold;color:#c2c2c2">5</div>
<div class="t" style="left:120.500px;top:666.58px;font-size:9px;font-weight:bold;color:#c6c6c6">U</div>
<div class="t" style="left:390px;top:666.58px;font-size:9px;color:#b8b8b8;transform:scaleX(.97)">None</div>
<div class="a" style="left:1px;top:677.85px;width:469px;height:12.67px;background:#2a2a2a"></div>
<div class="a" style="left:38.9px;top:678.55px;width:9.800px;height:10.87px;background:#222222"></div>
<div class="a" style="left:274.5px;top:678.55px;width:9.800px;height:10.87px;background:#222222"></div>
<div class="a" style="left:286px;top:678.55px;width:9.800px;height:10.87px;background:#222222"></div>
<div class="a" style="left:321.7px;top:678.55px;width:9.800px;height:10.87px;background:#222222"></div>
<div class="a" style="left:333.3px;top:678.55px;width:9.800px;height:10.87px;background:#222222"></div>
<div class="a" style="left:345px;top:678.55px;width:9.800px;height:10.87px;background:#222222"></div>
<div class="a" style="left:4.2px;top:678.55px;width:9.800px;height:10.87px;background:#222222"></div>
<div class="a" style="left:385px;top:678.35px;width:69px;height:11.47px;background:#1c1c1c;border-radius:1px"></div>
<div class="t" style="left:83px;top:679.85px;font-size:9px;font-weight:bold;color:#c2c2c2">6</div>
<div class="t" style="left:120.500px;top:679.85px;font-size:9px;font-weight:bold;color:#c6c6c6">O</div>
<div class="t" style="left:390px;top:679.85px;font-size:9px;color:#b8b8b8;transform:scaleX(.97)">None</div>
<div class="a" style="left:1px;top:691.12px;width:469px;height:12.67px;background:#2a2a2a"></div>
<div class="a" style="left:38.9px;top:691.82px;width:9.800px;height:10.87px;background:#222222"></div>
<div class="a" style="left:274.5px;top:691.82px;width:9.800px;height:10.87px;background:#222222"></div>
<div class="a" style="left:286px;top:691.82px;width:9.800px;height:10.87px;background:#222222"></div>
<div class="a" style="left:321.7px;top:691.82px;width:9.800px;height:10.87px;background:#222222"></div>
<div class="a" style="left:333.3px;top:691.82px;width:9.800px;height:10.87px;background:#222222"></div>
<div class="a" style="left:345px;top:691.82px;width:9.800px;height:10.87px;background:#222222"></div>
<div class="a" style="left:4.2px;top:691.82px;width:9.800px;height:10.87px;background:#222222"></div>
<div class="a" style="left:385px;top:691.62px;width:69px;height:11.47px;background:#1c1c1c;border-radius:1px"></div>
<div class="t" style="left:83px;top:693.12px;font-size:9px;font-weight:bold;color:#c2c2c2">7</div>
<div class="t" style="left:120.500px;top:693.12px;font-size:9px;font-weight:bold;color:#c6c6c6">Consonantes</div>
<div class="t" style="left:390px;top:693.12px;font-size:9px;color:#b8b8b8;transform:scaleX(.97)">None</div>
<div class="a" style="left:1px;top:704.39px;width:469px;height:12.67px;background:#2a2a2a"></div>
<div class="a" style="left:38.9px;top:705.09px;width:9.800px;height:10.87px;background:#222222"></div>
<div class="a" style="left:274.5px;top:705.09px;width:9.800px;height:10.87px;background:#222222"></div>
<div class="a" style="left:286px;top:705.09px;width:9.800px;height:10.87px;background:#222222"></div>
<div class="a" style="left:321.7px;top:705.09px;width:9.800px;height:10.87px;background:#222222"></div>
<div class="a" style="left:333.3px;top:705.09px;width:9.800px;height:10.87px;background:#222222"></div>
<div class="a" style="left:345px;top:705.09px;width:9.800px;height:10.87px;background:#222222"></div>
<div class="a" style="left:27.2px;top:705.09px;width:9.800px;height:10.87px;background:#222222"></div>
<div class="a" style="left:385px;top:704.89px;width:69px;height:11.47px;background:#1c1c1c;border-radius:1px"></div>
<div class="t" style="left:83px;top:706.39px;font-size:9px;font-weight:bold;color:#c2c2c2">8</div>
<div class="t" style="left:120.500px;top:706.39px;font-size:9px;font-weight:bold;color:#c6c6c6">A E</div>
<div class="t" style="left:390px;top:706.39px;font-size:9px;color:#b8b8b8;transform:scaleX(.97)">None</div>
<div class="a" style="left:1px;top:717.66px;width:469px;height:12.67px;background:#2a2a2a"></div>
<div class="a" style="left:38.9px;top:718.36px;width:9.800px;height:10.87px;background:#222222"></div>
<div class="a" style="left:274.5px;top:718.36px;width:9.800px;height:10.87px;background:#222222"></div>
<div class="a" style="left:286px;top:718.36px;width:9.800px;height:10.87px;background:#222222"></div>
<div class="a" style="left:321.7px;top:718.36px;width:9.800px;height:10.87px;background:#222222"></div>
<div class="a" style="left:333.3px;top:718.36px;width:9.800px;height:10.87px;background:#222222"></div>
<div class="a" style="left:345px;top:718.36px;width:9.800px;height:10.87px;background:#222222"></div>
<div class="a" style="left:4.2px;top:718.36px;width:9.800px;height:10.87px;background:#222222"></div>
<div class="a" style="left:385px;top:718.16px;width:69px;height:11.47px;background:#1c1c1c;border-radius:1px"></div>
<div class="t" style="left:83px;top:719.66px;font-size:9px;font-weight:bold;color:#c2c2c2">9</div>
<div class="t" style="left:120.500px;top:719.66px;font-size:9px;font-weight:bold;color:#c6c6c6">I</div>
<div class="t" style="left:390px;top:719.66px;font-size:9px;color:#b8b8b8;transform:scaleX(.97)">None</div>
<div class="a" style="left:1px;top:730.93px;width:469px;height:12.67px;background:#2a2a2a"></div>
<div class="a" style="left:38.9px;top:731.63px;width:9.800px;height:10.87px;background:#222222"></div>
<div class="a" style="left:274.5px;top:731.63px;width:9.800px;height:10.87px;background:#222222"></div>
<div class="a" style="left:286px;top:731.63px;width:9.800px;height:10.87px;background:#222222"></div>
<div class="a" style="left:321.7px;top:731.63px;width:9.800px;height:10.87px;background:#222222"></div>
<div class="a" style="left:333.3px;top:731.63px;width:9.800px;height:10.87px;background:#222222"></div>
<div class="a" style="left:345px;top:731.63px;width:9.800px;height:10.87px;background:#222222"></div>
<div class="a" style="left:27.2px;top:731.63px;width:9.800px;height:10.87px;background:#222222"></div>
<div class="a" style="left:385px;top:731.43px;width:69px;height:11.47px;background:#1c1c1c;border-radius:1px"></div>
<div class="t" style="left:83.2px;top:732.93px;font-size:9px;font-weight:bold;color:#c2c2c2">10</div>
<div class="t" style="left:120.500px;top:732.93px;font-size:9px;font-weight:bold;color:#c6c6c6">A Ceja</div>
<div class="t" style="left:390px;top:732.93px;font-size:9px;color:#b8b8b8;transform:scaleX(.97)">None</div>
<div class="a" style="left:1px;top:744.20px;width:469px;height:12.67px;background:#2a2a2a"></div>
<div class="a" style="left:38.9px;top:744.90px;width:9.800px;height:10.87px;background:#222222"></div>
<div class="a" style="left:274.5px;top:744.90px;width:9.800px;height:10.87px;background:#222222"></div>
<div class="a" style="left:286px;top:744.90px;width:9.800px;height:10.87px;background:#222222"></div>
<div class="a" style="left:321.7px;top:744.90px;width:9.800px;height:10.87px;background:#222222"></div>
<div class="a" style="left:333.3px;top:744.90px;width:9.800px;height:10.87px;background:#222222"></div>
<div class="a" style="left:345px;top:744.90px;width:9.800px;height:10.87px;background:#222222"></div>
<div class="a" style="left:27.2px;top:744.90px;width:9.800px;height:10.87px;background:#222222"></div>
<div class="a" style="left:385px;top:744.70px;width:69px;height:11.47px;background:#1c1c1c;border-radius:1px"></div>
<div class="t" style="left:83.2px;top:746.20px;font-size:9px;font-weight:bold;color:#c2c2c2">11</div>
<div class="t" style="left:120.500px;top:746.20px;font-size:9px;font-weight:bold;color:#c6c6c6">B Ceja</div>
<div class="t" style="left:390px;top:746.20px;font-size:9px;color:#b8b8b8;transform:scaleX(.97)">None</div>
<div class="a" style="left:1px;top:757.47px;width:469px;height:12.67px;background:#2a2a2a"></div>
<div class="a" style="left:38.9px;top:758.17px;width:9.800px;height:10.87px;background:#222222"></div>
<div class="a" style="left:274.5px;top:758.17px;width:9.800px;height:10.87px;background:#222222"></div>
<div class="a" style="left:286px;top:758.17px;width:9.800px;height:10.87px;background:#222222"></div>
<div class="a" style="left:321.7px;top:758.17px;width:9.800px;height:10.87px;background:#222222"></div>
<div class="a" style="left:333.3px;top:758.17px;width:9.800px;height:10.87px;background:#222222"></div>
<div class="a" style="left:345px;top:758.17px;width:9.800px;height:10.87px;background:#222222"></div>
<div class="a" style="left:4.2px;top:758.17px;width:9.800px;height:10.87px;background:#222222"></div>
<div class="a" style="left:385px;top:757.97px;width:69px;height:11.47px;background:#1c1c1c;border-radius:1px"></div>
<div class="t" style="left:83.2px;top:759.47px;font-size:9px;font-weight:bold;color:#c2c2c2">12</div>
<div class="t" style="left:120.500px;top:759.47px;font-size:9px;font-weight:bold;color:#c6c6c6">Ojos Cerrados</div>
<div class="t" style="left:390px;top:759.47px;font-size:9px;color:#b8b8b8;transform:scaleX(.97)">None</div>
<div class="a" style="left:1px;top:770.74px;width:469px;height:12.67px;background:#2a2a2a"></div>
<div class="a" style="left:38.9px;top:771.44px;width:9.800px;height:10.87px;background:#222222"></div>
<div class="a" style="left:274.5px;top:771.44px;width:9.800px;height:10.87px;background:#222222"></div>
<div class="a" style="left:286px;top:771.44px;width:9.800px;height:10.87px;background:#222222"></div>
<div class="a" style="left:321.7px;top:771.44px;width:9.800px;height:10.87px;background:#222222"></div>
<div class="a" style="left:333.3px;top:771.44px;width:9.800px;height:10.87px;background:#222222"></div>
<div class="a" style="left:345px;top:771.44px;width:9.800px;height:10.87px;background:#222222"></div>
<div class="a" style="left:27.2px;top:771.44px;width:9.800px;height:10.87px;background:#222222"></div>
<div class="a" style="left:385px;top:771.24px;width:69px;height:11.47px;background:#1c1c1c;border-radius:1px"></div>
<div class="t" style="left:83.2px;top:772.74px;font-size:9px;font-weight:bold;color:#c2c2c2">13</div>
<div class="t" style="left:120.500px;top:772.74px;font-size:9px;font-weight:bold;color:#c6c6c6">Ojos Abiertos</div>
<div class="t" style="left:390px;top:772.74px;font-size:9px;color:#b8b8b8;transform:scaleX(.97)">None</div>
<div class="a" style="left:1px;top:784.01px;width:469px;height:12.67px;background:#2a2a2a"></div>
<div class="a" style="left:38.9px;top:784.71px;width:9.800px;height:10.87px;background:#222222"></div>
<div class="a" style="left:274.5px;top:784.71px;width:9.800px;height:10.87px;background:#222222"></div>
<div class="a" style="left:286px;top:784.71px;width:9.800px;height:10.87px;background:#222222"></div>
<div class="a" style="left:321.7px;top:784.71px;width:9.800px;height:10.87px;background:#222222"></div>
<div class="a" style="left:333.3px;top:784.71px;width:9.800px;height:10.87px;background:#222222"></div>
<div class="a" style="left:345px;top:784.71px;width:9.800px;height:10.87px;background:#222222"></div>
<div class="a" style="left:27.2px;top:784.71px;width:9.800px;height:10.87px;background:#222222"></div>
<div class="a" style="left:385px;top:784.51px;width:69px;height:11.47px;background:#1c1c1c;border-radius:1px"></div>
<div class="t" style="left:83.2px;top:786.01px;font-size:9px;font-weight:bold;color:#c2c2c2">14</div>
<div class="t" style="left:120.500px;top:786.01px;font-size:9px;font-weight:bold;color:#c6c6c6">Nariz</div>
<div class="t" style="left:390px;top:786.01px;font-size:9px;color:#b8b8b8;transform:scaleX(.97)">None</div>
<div class="a" style="left:1px;top:797.28px;width:469px;height:12.67px;background:#2a2a2a"></div>
<div class="a" style="left:38.9px;top:797.98px;width:9.800px;height:10.87px;background:#222222"></div>
<div class="a" style="left:274.5px;top:797.98px;width:9.800px;height:10.87px;background:#222222"></div>
<div class="a" style="left:286px;top:797.98px;width:9.800px;height:10.87px;background:#222222"></div>
<div class="a" style="left:321.7px;top:797.98px;width:9.800px;height:10.87px;background:#222222"></div>
<div class="a" style="left:333.3px;top:797.98px;width:9.800px;height:10.87px;background:#222222"></div>
<div class="a" style="left:345px;top:797.98px;width:9.800px;height:10.87px;background:#222222"></div>
<div class="a" style="left:27.2px;top:797.98px;width:9.800px;height:10.87px;background:#222222"></div>
<div class="a" style="left:385px;top:797.78px;width:69px;height:11.47px;background:#1c1c1c;border-radius:1px"></div>
<div class="t" style="left:83.2px;top:799.28px;font-size:9px;font-weight:bold;color:#c2c2c2">15</div>
<div class="t" style="left:120.500px;top:799.28px;font-size:9px;font-weight:bold;color:#c6c6c6">Banda</div>
<div class="t" style="left:390px;top:799.28px;font-size:9px;color:#b8b8b8;transform:scaleX(.97)">None</div>
<div class="a" style="left:1px;top:810.55px;width:469px;height:12.67px;background:#2a2a2a"></div>
<div class="a" style="left:38.9px;top:811.25px;width:9.800px;height:10.87px;background:#222222"></div>
<div class="a" style="left:274.5px;top:811.25px;width:9.800px;height:10.87px;background:#222222"></div>
<div class="a" style="left:286px;top:811.25px;width:9.800px;height:10.87px;background:#222222"></div>
<div class="a" style="left:321.7px;top:811.25px;width:9.800px;height:10.87px;background:#222222"></div>
<div class="a" style="left:333.3px;top:811.25px;width:9.800px;height:10.87px;background:#222222"></div>
<div class="a" style="left:345px;top:811.25px;width:9.800px;height:10.87px;background:#222222"></div>
<div class="a" style="left:27.2px;top:811.25px;width:9.800px;height:10.87px;background:#222222"></div>
<div class="a" style="left:385px;top:811.05px;width:69px;height:11.47px;background:#1c1c1c;border-radius:1px"></div>
<div class="t" style="left:83.2px;top:812.55px;font-size:9px;font-weight:bold;color:#c2c2c2">16</div>
<div class="t" style="left:120.500px;top:812.55px;font-size:9px;font-weight:bold;color:#c6c6c6">Cabeza</div>
<div class="t" style="left:390px;top:812.55px;font-size:9px;color:#b8b8b8;transform:scaleX(.97)">None</div>
<svg style="left:0;top:611px" width="470" height="207" viewBox="0 611 470 207"><path d="M5 618.0 c2.200-3.700 6.400-3.700 8.600 0 c-2.200 3.700-6.400 3.700-8.600 0z" fill="#c6c6c6"/><circle cx="9.3" cy="618.0" r="1.700" fill="#1c1c1c"/><path d="M56.500 614.70l6.400 3.200-6.400 3.200z" fill="#c2c2c2"/><rect x="66.800" y="612.80" width="9.400" height="9.600" fill="#b2a9d7"/><rect x="105.500" y="613.20" width="10" height="3" fill="#f08a24"/><path d="M108 613.20v3M110.500 613.20v3M113 613.20v3" stroke="#7a3808" stroke-width=".5"/><rect x="108.800" y="616.20" width="7.400" height="6.800" fill="#3a1606"/><path d="M110.500 621.80l1.500-4 1.500 4M114.300 619.00v2.800" stroke="#f08a24" stroke-width=".9" fill="none"/><g fill="#c0c0c0"><path d="M263.5 617.7a4.200 3.600 0 0 1 8.400 0z"/><rect x="263" y="618.3000000000001" width="9.400" height="1"/><rect x="264.2" y="619.9000000000001" width="7" height="1.500"/></g><path d="M267.7 613.9000000000001v6.500" stroke="#2b2b2b" stroke-width=".9"/><path d="M287.500 621.80l7-8" stroke="#c6c6c6" stroke-width="1.200"/><path d="M373.600 618.50a1.500 1.500 0 1 1 1.500 1.500a3 3 0 1 1 3-3a4.600 4.600 0 0 1-4.600 4.700c-1.200 0-2.200-.3-3-.9" stroke="#b4b4b4" stroke-width=".95" fill="none"/><path d="M444.500 616.50l3 3 3-3" stroke="#b4b4b4" stroke-width="1.100" fill="none"/><path d="M5 631.27 c2.200-3.700 6.400-3.700 8.600 0 c-2.200 3.700-6.400 3.700-8.600 0z" fill="#c6c6c6"/><circle cx="9.3" cy="631.27" r="1.700" fill="#1c1c1c"/><path d="M56.500 627.97l6.400 3.200-6.400 3.200z" fill="#c2c2c2"/><rect x="66.800" y="626.07" width="9.400" height="9.600" fill="#b2a9d7"/><rect x="105.500" y="626.47" width="10" height="3" fill="#f08a24"/><path d="M108 626.47v3M110.500 626.47v3M113 626.47v3" stroke="#7a3808" stroke-width=".5"/><rect x="108.800" y="629.47" width="7.400" height="6.800" fill="#3a1606"/><path d="M110.500 635.07l1.500-4 1.500 4M114.300 632.27v2.800" stroke="#f08a24" stroke-width=".9" fill="none"/><g fill="#c0c0c0"><path d="M263.5 630.97a4.200 3.600 0 0 1 8.400 0z"/><rect x="263" y="631.57" width="9.400" height="1"/><rect x="264.2" y="633.1700000000001" width="7" height="1.500"/></g><path d="M267.7 627.1700000000001v6.500" stroke="#2b2b2b" stroke-width=".9"/><path d="M287.500 635.07l7-8" stroke="#c6c6c6" stroke-width="1.200"/><path d="M373.600 631.77a1.500 1.500 0 1 1 1.500 1.500a3 3 0 1 1 3-3a4.600 4.600 0 0 1-4.600 4.700c-1.200 0-2.200-.3-3-.9" stroke="#b4b4b4" stroke-width=".95" fill="none"/><path d="M444.500 629.77l3 3 3-3" stroke="#b4b4b4" stroke-width="1.100" fill="none"/><path d="M56.500 641.24l6.400 3.200-6.400 3.200z" fill="#c2c2c2"/><rect x="66.800" y="639.34" width="9.400" height="9.600" fill="#b2a9d7"/><rect x="105.500" y="639.74" width="10" height="3" fill="#f08a24"/><path d="M108 639.74v3M110.500 639.74v3M113 639.74v3" stroke="#7a3808" stroke-width=".5"/><rect x="108.800" y="642.74" width="7.400" height="6.800" fill="#3a1606"/><path d="M110.500 648.34l1.500-4 1.500 4M114.300 645.54v2.800" stroke="#f08a24" stroke-width=".9" fill="none"/><g fill="#c0c0c0"><path d="M263.5 644.24a4.200 3.600 0 0 1 8.400 0z"/><rect x="263" y="644.84" width="9.400" height="1"/><rect x="264.2" y="646.44" width="7" height="1.500"/></g><path d="M267.7 640.44v6.500" stroke="#2b2b2b" stroke-width=".9"/><path d="M287.500 648.34l7-8" stroke="#c6c6c6" stroke-width="1.200"/><path d="M373.600 645.04a1.500 1.500 0 1 1 1.500 1.500a3 3 0 1 1 3-3a4.600 4.600 0 0 1-4.600 4.700c-1.200 0-2.200-.3-3-.9" stroke="#b4b4b4" stroke-width=".95" fill="none"/><path d="M444.500 643.04l3 3 3-3" stroke="#b4b4b4" stroke-width="1.100" fill="none"/><path d="M56.500 654.51l6.400 3.200-6.400 3.200z" fill="#c2c2c2"/><rect x="66.800" y="652.61" width="9.400" height="9.600" fill="#b2a9d7"/><rect x="105.500" y="653.01" width="10" height="3" fill="#f08a24"/><path d="M108 653.01v3M110.500 653.01v3M113 653.01v3" stroke="#7a3808" stroke-width=".5"/><rect x="108.800" y="656.01" width="7.400" height="6.800" fill="#3a1606"/><path d="M110.500 661.61l1.500-4 1.500 4M114.300 658.81v2.800" stroke="#f08a24" stroke-width=".9" fill="none"/><g fill="#c0c0c0"><path d="M263.5 657.51a4.200 3.600 0 0 1 8.400 0z"/><rect x="263" y="658.11" width="9.400" height="1"/><rect x="264.2" y="659.71" width="7" height="1.500"/></g><path d="M267.7 653.71v6.500" stroke="#2b2b2b" stroke-width=".9"/><path d="M287.500 661.61l7-8" stroke="#c6c6c6" stroke-width="1.200"/><path d="M373.600 658.31a1.500 1.500 0 1 1 1.500 1.500a3 3 0 1 1 3-3a4.600 4.600 0 0 1-4.600 4.700c-1.200 0-2.200-.3-3-.9" stroke="#b4b4b4" stroke-width=".95" fill="none"/><path d="M444.500 656.31l3 3 3-3" stroke="#b4b4b4" stroke-width="1.100" fill="none"/><path d="M56.500 667.78l6.400 3.200-6.400 3.200z" fill="#c2c2c2"/><rect x="66.800" y="665.88" width="9.400" height="9.600" fill="#b2a9d7"/><rect x="105.500" y="666.28" width="10" height="3" fill="#f08a24"/><path d="M108 666.28v3M110.500 666.28v3M113 666.28v3" stroke="#7a3808" stroke-width=".5"/><rect x="108.800" y="669.28" width="7.400" height="6.800" fill="#3a1606"/><path d="M110.500 674.88l1.500-4 1.500 4M114.300 672.08v2.800" stroke="#f08a24" stroke-width=".9" fill="none"/><g fill="#c0c0c0"><path d="M263.5 670.78a4.200 3.600 0 0 1 8.400 0z"/><rect x="263" y="671.38" width="9.400" height="1"/><rect x="264.2" y="672.98" width="7" height="1.500"/></g><path d="M267.7 666.98v6.500" stroke="#2b2b2b" stroke-width=".9"/><path d="M287.500 674.88l7-8" stroke="#c6c6c6" stroke-width="1.200"/><path d="M373.600 671.58a1.500 1.500 0 1 1 1.500 1.500a3 3 0 1 1 3-3a4.600 4.600 0 0 1-4.600 4.700c-1.200 0-2.200-.3-3-.9" stroke="#b4b4b4" stroke-width=".95" fill="none"/><path d="M444.500 669.58l3 3 3-3" stroke="#b4b4b4" stroke-width="1.100" fill="none"/><path d="M56.500 681.05l6.400 3.200-6.400 3.200z" fill="#c2c2c2"/><rect x="66.800" y="679.15" width="9.400" height="9.600" fill="#b2a9d7"/><rect x="105.500" y="679.55" width="10" height="3" fill="#f08a24"/><path d="M108 679.55v3M110.500 679.55v3M113 679.55v3" stroke="#7a3808" stroke-width=".5"/><rect x="108.800" y="682.55" width="7.400" height="6.800" fill="#3a1606"/><path d="M110.500 688.15l1.500-4 1.500 4M114.300 685.35v2.800" stroke="#f08a24" stroke-width=".9" fill="none"/><g fill="#c0c0c0"><path d="M263.5 684.05a4.200 3.600 0 0 1 8.400 0z"/><rect x="263" y="684.65" width="9.400" height="1"/><rect x="264.2" y="686.25" width="7" height="1.500"/></g><path d="M267.7 680.25v6.500" stroke="#2b2b2b" stroke-width=".9"/><path d="M287.500 688.15l7-8" stroke="#c6c6c6" stroke-width="1.200"/><path d="M373.600 684.85a1.500 1.500 0 1 1 1.500 1.500a3 3 0 1 1 3-3a4.600 4.600 0 0 1-4.600 4.700c-1.200 0-2.200-.3-3-.9" stroke="#b4b4b4" stroke-width=".95" fill="none"/><path d="M444.500 682.85l3 3 3-3" stroke="#b4b4b4" stroke-width="1.100" fill="none"/><path d="M56.500 694.32l6.400 3.200-6.400 3.200z" fill="#c2c2c2"/><rect x="66.800" y="692.42" width="9.400" height="9.600" fill="#b2a9d7"/><rect x="105.500" y="692.82" width="10" height="3" fill="#f08a24"/><path d="M108 692.82v3M110.500 692.82v3M113 692.82v3" stroke="#7a3808" stroke-width=".5"/><rect x="108.800" y="695.82" width="7.400" height="6.800" fill="#3a1606"/><path d="M110.500 701.42l1.500-4 1.500 4M114.300 698.62v2.800" stroke="#f08a24" stroke-width=".9" fill="none"/><g fill="#c0c0c0"><path d="M263.5 697.32a4.200 3.600 0 0 1 8.400 0z"/><rect x="263" y="697.9200000000001" width="9.400" height="1"/><rect x="264.2" y="699.5200000000001" width="7" height="1.500"/></g><path d="M267.7 693.5200000000001v6.500" stroke="#2b2b2b" stroke-width=".9"/><path d="M287.500 701.42l7-8" stroke="#c6c6c6" stroke-width="1.200"/><path d="M373.600 698.12a1.500 1.500 0 1 1 1.500 1.500a3 3 0 1 1 3-3a4.600 4.600 0 0 1-4.600 4.700c-1.200 0-2.200-.3-3-.9" stroke="#b4b4b4" stroke-width=".95" fill="none"/><path d="M444.500 696.12l3 3 3-3" stroke="#b4b4b4" stroke-width="1.100" fill="none"/><path d="M5 710.89 c2.200-3.700 6.400-3.700 8.600 0 c-2.200 3.700-6.400 3.700-8.600 0z" fill="#c6c6c6"/><circle cx="9.3" cy="710.89" r="1.700" fill="#1c1c1c"/><path d="M56.500 707.59l6.400 3.200-6.400 3.200z" fill="#c2c2c2"/><rect x="66.800" y="705.69" width="9.400" height="9.600" fill="#b2a9d7"/><rect x="105.500" y="706.09" width="10" height="3" fill="#f08a24"/><path d="M108 706.09v3M110.500 706.09v3M113 706.09v3" stroke="#7a3808" stroke-width=".5"/><rect x="108.800" y="709.09" width="7.400" height="6.800" fill="#3a1606"/><path d="M110.500 714.69l1.500-4 1.500 4M114.300 711.89v2.800" stroke="#f08a24" stroke-width=".9" fill="none"/><g fill="#c0c0c0"><path d="M263.5 710.59a4.200 3.600 0 0 1 8.400 0z"/><rect x="263" y="711.19" width="9.400" height="1"/><rect x="264.2" y="712.7900000000001" width="7" height="1.500"/></g><path d="M267.7 706.7900000000001v6.500" stroke="#2b2b2b" stroke-width=".9"/><path d="M287.500 714.69l7-8" stroke="#c6c6c6" stroke-width="1.200"/><path d="M373.600 711.39a1.500 1.500 0 1 1 1.500 1.500a3 3 0 1 1 3-3a4.600 4.600 0 0 1-4.600 4.700c-1.200 0-2.200-.3-3-.9" stroke="#b4b4b4" stroke-width=".95" fill="none"/><path d="M444.500 709.39l3 3 3-3" stroke="#b4b4b4" stroke-width="1.100" fill="none"/><path d="M56.500 720.86l6.400 3.200-6.400 3.200z" fill="#c2c2c2"/><rect x="66.800" y="718.96" width="9.400" height="9.600" fill="#b2a9d7"/><rect x="105.500" y="719.36" width="10" height="3" fill="#f08a24"/><path d="M108 719.36v3M110.500 719.36v3M113 719.36v3" stroke="#7a3808" stroke-width=".5"/><rect x="108.800" y="722.36" width="7.400" height="6.800" fill="#3a1606"/><path d="M110.500 727.96l1.500-4 1.500 4M114.300 725.16v2.800" stroke="#f08a24" stroke-width=".9" fill="none"/><g fill="#c0c0c0"><path d="M263.5 723.86a4.200 3.600 0 0 1 8.400 0z"/><rect x="263" y="724.46" width="9.400" height="1"/><rect x="264.2" y="726.0600000000001" width="7" height="1.500"/></g><path d="M267.7 720.0600000000001v6.500" stroke="#2b2b2b" stroke-width=".9"/><path d="M287.500 727.96l7-8" stroke="#c6c6c6" stroke-width="1.200"/><path d="M373.600 724.66a1.500 1.500 0 1 1 1.500 1.500a3 3 0 1 1 3-3a4.600 4.600 0 0 1-4.600 4.700c-1.200 0-2.200-.3-3-.9" stroke="#b4b4b4" stroke-width=".95" fill="none"/><path d="M444.500 722.66l3 3 3-3" stroke="#b4b4b4" stroke-width="1.100" fill="none"/><path d="M5 737.43 c2.200-3.700 6.400-3.700 8.600 0 c-2.200 3.700-6.400 3.700-8.600 0z" fill="#c6c6c6"/><circle cx="9.3" cy="737.43" r="1.700" fill="#1c1c1c"/><path d="M56.500 734.13l6.400 3.200-6.400 3.200z" fill="#c2c2c2"/><rect x="66.800" y="732.23" width="9.400" height="9.600" fill="#b2a9d7"/><rect x="105.500" y="732.63" width="10" height="3" fill="#f08a24"/><path d="M108 732.63v3M110.500 732.63v3M113 732.63v3" stroke="#7a3808" stroke-width=".5"/><rect x="108.800" y="735.63" width="7.400" height="6.800" fill="#3a1606"/><path d="M110.500 741.23l1.500-4 1.500 4M114.300 738.43v2.800" stroke="#f08a24" stroke-width=".9" fill="none"/><g fill="#c0c0c0"><path d="M263.5 737.13a4.200 3.600 0 0 1 8.400 0z"/><rect x="263" y="737.73" width="9.400" height="1"/><rect x="264.2" y="739.33" width="7" height="1.500"/></g><path d="M267.7 733.33v6.500" stroke="#2b2b2b" stroke-width=".9"/><path d="M287.500 741.23l7-8" stroke="#c6c6c6" stroke-width="1.200"/><path d="M373.600 737.93a1.500 1.500 0 1 1 1.500 1.500a3 3 0 1 1 3-3a4.600 4.600 0 0 1-4.600 4.700c-1.200 0-2.200-.3-3-.9" stroke="#b4b4b4" stroke-width=".95" fill="none"/><path d="M444.500 735.93l3 3 3-3" stroke="#b4b4b4" stroke-width="1.100" fill="none"/><path d="M5 750.7 c2.200-3.700 6.400-3.700 8.600 0 c-2.200 3.700-6.400 3.700-8.600 0z" fill="#c6c6c6"/><circle cx="9.3" cy="750.7" r="1.700" fill="#1c1c1c"/><path d="M56.500 747.40l6.400 3.200-6.400 3.200z" fill="#c2c2c2"/><rect x="66.800" y="745.50" width="9.400" height="9.600" fill="#b2a9d7"/><rect x="105.500" y="745.90" width="10" height="3" fill="#f08a24"/><path d="M108 745.90v3M110.500 745.90v3M113 745.90v3" stroke="#7a3808" stroke-width=".5"/><rect x="108.800" y="748.90" width="7.400" height="6.800" fill="#3a1606"/><path d="M110.500 754.50l1.500-4 1.500 4M114.300 751.70v2.800" stroke="#f08a24" stroke-width=".9" fill="none"/><g fill="#c0c0c0"><path d="M263.5 750.4a4.200 3.600 0 0 1 8.400 0z"/><rect x="263" y="751.0" width="9.400" height="1"/><rect x="264.2" y="752.6" width="7" height="1.500"/></g><path d="M267.7 746.6v6.500" stroke="#2b2b2b" stroke-width=".9"/><path d="M287.500 754.50l7-8" stroke="#c6c6c6" stroke-width="1.200"/><path d="M373.600 751.20a1.500 1.500 0 1 1 1.500 1.500a3 3 0 1 1 3-3a4.600 4.600 0 0 1-4.600 4.700c-1.200 0-2.200-.3-3-.9" stroke="#b4b4b4" stroke-width=".95" fill="none"/><path d="M444.500 749.20l3 3 3-3" stroke="#b4b4b4" stroke-width="1.100" fill="none"/><path d="M56.500 760.67l6.400 3.200-6.400 3.200z" fill="#c2c2c2"/><rect x="66.800" y="758.77" width="9.400" height="9.600" fill="#b2a9d7"/><rect x="105.500" y="759.17" width="10" height="3" fill="#f08a24"/><path d="M108 759.17v3M110.500 759.17v3M113 759.17v3" stroke="#7a3808" stroke-width=".5"/><rect x="108.800" y="762.17" width="7.400" height="6.800" fill="#3a1606"/><path d="M110.500 767.77l1.500-4 1.500 4M114.300 764.97v2.800" stroke="#f08a24" stroke-width=".9" fill="none"/><g fill="#c0c0c0"><path d="M263.5 763.67a4.200 3.600 0 0 1 8.400 0z"/><rect x="263" y="764.27" width="9.400" height="1"/><rect x="264.2" y="765.87" width="7" height="1.500"/></g><path d="M267.7 759.87v6.500" stroke="#2b2b2b" stroke-width=".9"/><path d="M287.500 767.77l7-8" stroke="#c6c6c6" stroke-width="1.200"/><path d="M373.600 764.47a1.500 1.500 0 1 1 1.500 1.500a3 3 0 1 1 3-3a4.600 4.600 0 0 1-4.600 4.700c-1.200 0-2.200-.3-3-.9" stroke="#b4b4b4" stroke-width=".95" fill="none"/><path d="M444.500 762.47l3 3 3-3" stroke="#b4b4b4" stroke-width="1.100" fill="none"/><path d="M5 777.24 c2.200-3.700 6.400-3.700 8.600 0 c-2.200 3.700-6.400 3.700-8.600 0z" fill="#c6c6c6"/><circle cx="9.3" cy="777.24" r="1.700" fill="#1c1c1c"/><path d="M56.500 773.94l6.400 3.200-6.400 3.200z" fill="#c2c2c2"/><rect x="66.800" y="772.04" width="9.400" height="9.600" fill="#b2a9d7"/><rect x="105.500" y="772.44" width="10" height="3" fill="#f08a24"/><path d="M108 772.44v3M110.500 772.44v3M113 772.44v3" stroke="#7a3808" stroke-width=".5"/><rect x="108.800" y="775.44" width="7.400" height="6.800" fill="#3a1606"/><path d="M110.500 781.04l1.500-4 1.500 4M114.300 778.24v2.800" stroke="#f08a24" stroke-width=".9" fill="none"/><g fill="#c0c0c0"><path d="M263.5 776.94a4.200 3.600 0 0 1 8.400 0z"/><rect x="263" y="777.5400000000001" width="9.400" height="1"/><rect x="264.2" y="779.1400000000001" width="7" height="1.500"/></g><path d="M267.7 773.1400000000001v6.500" stroke="#2b2b2b" stroke-width=".9"/><path d="M287.500 781.04l7-8" stroke="#c6c6c6" stroke-width="1.200"/><path d="M373.600 777.74a1.500 1.500 0 1 1 1.500 1.500a3 3 0 1 1 3-3a4.600 4.600 0 0 1-4.600 4.700c-1.200 0-2.200-.3-3-.9" stroke="#b4b4b4" stroke-width=".95" fill="none"/><path d="M444.500 775.74l3 3 3-3" stroke="#b4b4b4" stroke-width="1.100" fill="none"/><path d="M5 790.51 c2.200-3.700 6.400-3.700 8.600 0 c-2.200 3.700-6.400 3.700-8.600 0z" fill="#c6c6c6"/><circle cx="9.3" cy="790.51" r="1.700" fill="#1c1c1c"/><path d="M56.500 787.21l6.400 3.200-6.400 3.200z" fill="#c2c2c2"/><rect x="66.800" y="785.31" width="9.400" height="9.600" fill="#b2a9d7"/><rect x="105.500" y="785.71" width="10" height="3" fill="#f08a24"/><path d="M108 785.71v3M110.500 785.71v3M113 785.71v3" stroke="#7a3808" stroke-width=".5"/><rect x="108.800" y="788.71" width="7.400" height="6.800" fill="#3a1606"/><path d="M110.500 794.31l1.500-4 1.500 4M114.300 791.51v2.800" stroke="#f08a24" stroke-width=".9" fill="none"/><g fill="#c0c0c0"><path d="M263.5 790.21a4.200 3.600 0 0 1 8.400 0z"/><rect x="263" y="790.8100000000001" width="9.400" height="1"/><rect x="264.2" y="792.4100000000001" width="7" height="1.500"/></g><path d="M267.7 786.4100000000001v6.500" stroke="#2b2b2b" stroke-width=".9"/><path d="M287.500 794.31l7-8" stroke="#c6c6c6" stroke-width="1.200"/><path d="M373.600 791.01a1.500 1.500 0 1 1 1.500 1.500a3 3 0 1 1 3-3a4.600 4.600 0 0 1-4.600 4.700c-1.200 0-2.200-.3-3-.9" stroke="#b4b4b4" stroke-width=".95" fill="none"/><path d="M444.500 789.01l3 3 3-3" stroke="#b4b4b4" stroke-width="1.100" fill="none"/><path d="M5 803.78 c2.200-3.700 6.400-3.700 8.600 0 c-2.200 3.700-6.400 3.700-8.600 0z" fill="#c6c6c6"/><circle cx="9.3" cy="803.78" r="1.700" fill="#1c1c1c"/><path d="M56.500 800.48l6.400 3.200-6.400 3.200z" fill="#c2c2c2"/><rect x="66.800" y="798.58" width="9.400" height="9.600" fill="#b2a9d7"/><rect x="105.500" y="798.98" width="10" height="3" fill="#f08a24"/><path d="M108 798.98v3M110.500 798.98v3M113 798.98v3" stroke="#7a3808" stroke-width=".5"/><rect x="108.800" y="801.98" width="7.400" height="6.800" fill="#3a1606"/><path d="M110.500 807.58l1.500-4 1.500 4M114.300 804.78v2.800" stroke="#f08a24" stroke-width=".9" fill="none"/><g fill="#c0c0c0"><path d="M263.5 803.48a4.200 3.600 0 0 1 8.400 0z"/><rect x="263" y="804.08" width="9.400" height="1"/><rect x="264.2" y="805.6800000000001" width="7" height="1.500"/></g><path d="M267.7 799.6800000000001v6.500" stroke="#2b2b2b" stroke-width=".9"/><path d="M287.500 807.58l7-8" stroke="#c6c6c6" stroke-width="1.200"/><path d="M373.600 804.28a1.500 1.500 0 1 1 1.500 1.500a3 3 0 1 1 3-3a4.600 4.600 0 0 1-4.600 4.700c-1.200 0-2.200-.3-3-.9" stroke="#b4b4b4" stroke-width=".95" fill="none"/><path d="M444.500 802.28l3 3 3-3" stroke="#b4b4b4" stroke-width="1.100" fill="none"/><path d="M5 817.05 c2.200-3.700 6.400-3.700 8.600 0 c-2.200 3.700-6.400 3.700-8.600 0z" fill="#c6c6c6"/><circle cx="9.3" cy="817.05" r="1.700" fill="#1c1c1c"/><path d="M56.500 813.75l6.400 3.200-6.400 3.200z" fill="#c2c2c2"/><rect x="66.800" y="811.85" width="9.400" height="9.600" fill="#b2a9d7"/><rect x="105.500" y="812.25" width="10" height="3" fill="#f08a24"/><path d="M108 812.25v3M110.500 812.25v3M113 812.25v3" stroke="#7a3808" stroke-width=".5"/><rect x="108.800" y="815.25" width="7.400" height="6.800" fill="#3a1606"/><path d="M110.500 820.85l1.500-4 1.500 4M114.300 818.05v2.800" stroke="#f08a24" stroke-width=".9" fill="none"/><g fill="#c0c0c0"><path d="M263.5 816.75a4.200 3.600 0 0 1 8.400 0z"/><rect x="263" y="817.35" width="9.400" height="1"/><rect x="264.2" y="818.95" width="7" height="1.500"/></g><path d="M267.7 812.95v6.500" stroke="#2b2b2b" stroke-width=".9"/><path d="M287.500 820.85l7-8" stroke="#c6c6c6" stroke-width="1.200"/><path d="M373.600 817.55a1.500 1.500 0 1 1 1.500 1.500a3 3 0 1 1 3-3a4.600 4.600 0 0 1-4.600 4.700c-1.200 0-2.200-.3-3-.9" stroke="#b4b4b4" stroke-width=".95" fill="none"/><path d="M444.500 815.55l3 3 3-3" stroke="#b4b4b4" stroke-width="1.100" fill="none"/></svg>
<div class="a" style="left:469.500px;top:596px;width:1.500px;height:222px;background:#151515"></div>
<div class="a" style="left:471px;top:573.300px;width:973px;height:6.400px;background:#747474"></div>
<div class="a" style="left:470px;top:573.300px;width:6.500px;height:6.400px;background:#3a8be8;border-radius:3px 0 0 3px"></div>
<div class="a" style="left:471px;top:595.300px;width:973px;height:1.400px;background:#101010"></div>
<div class="a" style="left:542.1px;top:592px;width:1px;height:3.300px;background:#808080"></div>
<div class="t" style="left:535.6px;top:582.500px;font-size:8px;color:#a4a4a4;transform:scaleX(.93)">02s</div>
<div class="a" style="left:608.7px;top:592px;width:1px;height:3.300px;background:#808080"></div>
<div class="t" style="left:602.2px;top:582.500px;font-size:8px;color:#a4a4a4;transform:scaleX(.93)">04s</div>
<div class="a" style="left:675.2px;top:592px;width:1px;height:3.300px;background:#808080"></div>
<div class="t" style="left:668.7px;top:582.500px;font-size:8px;color:#a4a4a4;transform:scaleX(.93)">06s</div>
<div class="a" style="left:741.7px;top:592px;width:1px;height:3.300px;background:#808080"></div>
<div class="t" style="left:735.2px;top:582.500px;font-size:8px;color:#a4a4a4;transform:scaleX(.93)">08s</div>
<div class="a" style="left:808.2px;top:592px;width:1px;height:3.300px;background:#808080"></div>
<div class="t" style="left:801.8px;top:582.500px;font-size:8px;color:#a4a4a4;transform:scaleX(.93)">10s</div>
<div class="a" style="left:874.8px;top:592px;width:1px;height:3.300px;background:#808080"></div>
<div class="t" style="left:868.3px;top:582.500px;font-size:8px;color:#a4a4a4;transform:scaleX(.93)">12s</div>
<div class="a" style="left:941.3px;top:592px;width:1px;height:3.300px;background:#808080"></div>
<div class="t" style="left:934.8px;top:582.500px;font-size:8px;color:#a4a4a4;transform:scaleX(.93)">14s</div>
<div class="a" style="left:1007.8px;top:592px;width:1px;height:3.300px;background:#808080"></div>
<div class="t" style="left:1001.3px;top:582.500px;font-size:8px;color:#a4a4a4;transform:scaleX(.93)">16s</div>
<div class="a" style="left:1074.4px;top:592px;width:1px;height:3.300px;background:#808080"></div>
<div class="t" style="left:1067.9px;top:582.500px;font-size:8px;color:#a4a4a4;transform:scaleX(.93)">18s</div>
<div class="a" style="left:1140.9px;top:592px;width:1px;height:3.300px;background:#808080"></div>
<div class="t" style="left:1134.4px;top:582.500px;font-size:8px;color:#a4a4a4;transform:scaleX(.93)">20s</div>
<div class="a" style="left:1207.4px;top:592px;width:1px;height:3.300px;background:#808080"></div>
<div class="t" style="left:1200.9px;top:582.500px;font-size:8px;color:#a4a4a4;transform:scaleX(.93)">22s</div>
<div class="a" style="left:1274.0px;top:592px;width:1px;height:3.300px;background:#808080"></div>
<div class="t" style="left:1267.5px;top:582.500px;font-size:8px;color:#a4a4a4;transform:scaleX(.93)">24s</div>
<div class="a" style="left:1340.5px;top:592px;width:1px;height:3.300px;background:#808080"></div>
<div class="t" style="left:1334.0px;top:582.500px;font-size:8px;color:#a4a4a4;transform:scaleX(.93)">26s</div>
<div class="a" style="left:1407.0px;top:592px;width:1px;height:3.300px;background:#808080"></div>
<div class="t" style="left:1400.5px;top:582.500px;font-size:8px;color:#a4a4a4;transform:scaleX(.93)">28s</div>
<div class="t" style="left:473px;top:582.500px;font-size:8px;color:#b4b4b4;transform:scaleX(.93)">:00s</div>
<div class="a" style="left:476.500px;top:596.700px;width:968px;height:11.500px;background:#666666"></div>
<div class="a" style="left:471px;top:597px;width:5px;height:11.500px;background:#3a8be8;border-radius:2.500px 0 0 2.500px"></div>
<div class="a" style="left:476.500px;top:608.200px;width:968px;height:3.400px;background:linear-gradient(#1d6e1d,#2ec02e 30%,#2ec02e 70%,#1d6e1d)"></div>
<div class="a" style="left:476.500px;top:611.600px;width:968px;height:207px;background:repeating-linear-gradient(#747286 0,#747286 12.37px,#32313c 12.37px,#32313c 13.27px)"></div>
<div class="a" style="left:475.500px;top:590px;width:1.300px;height:228px;background:#3a8be8"></div>
<svg style="left:470px;top:584px" width="13" height="12"><path d="M2 1h8.400v3.500l-4.200 6-4.200-6z" fill="#3a8be8"/></svg>
</body>
</html>
